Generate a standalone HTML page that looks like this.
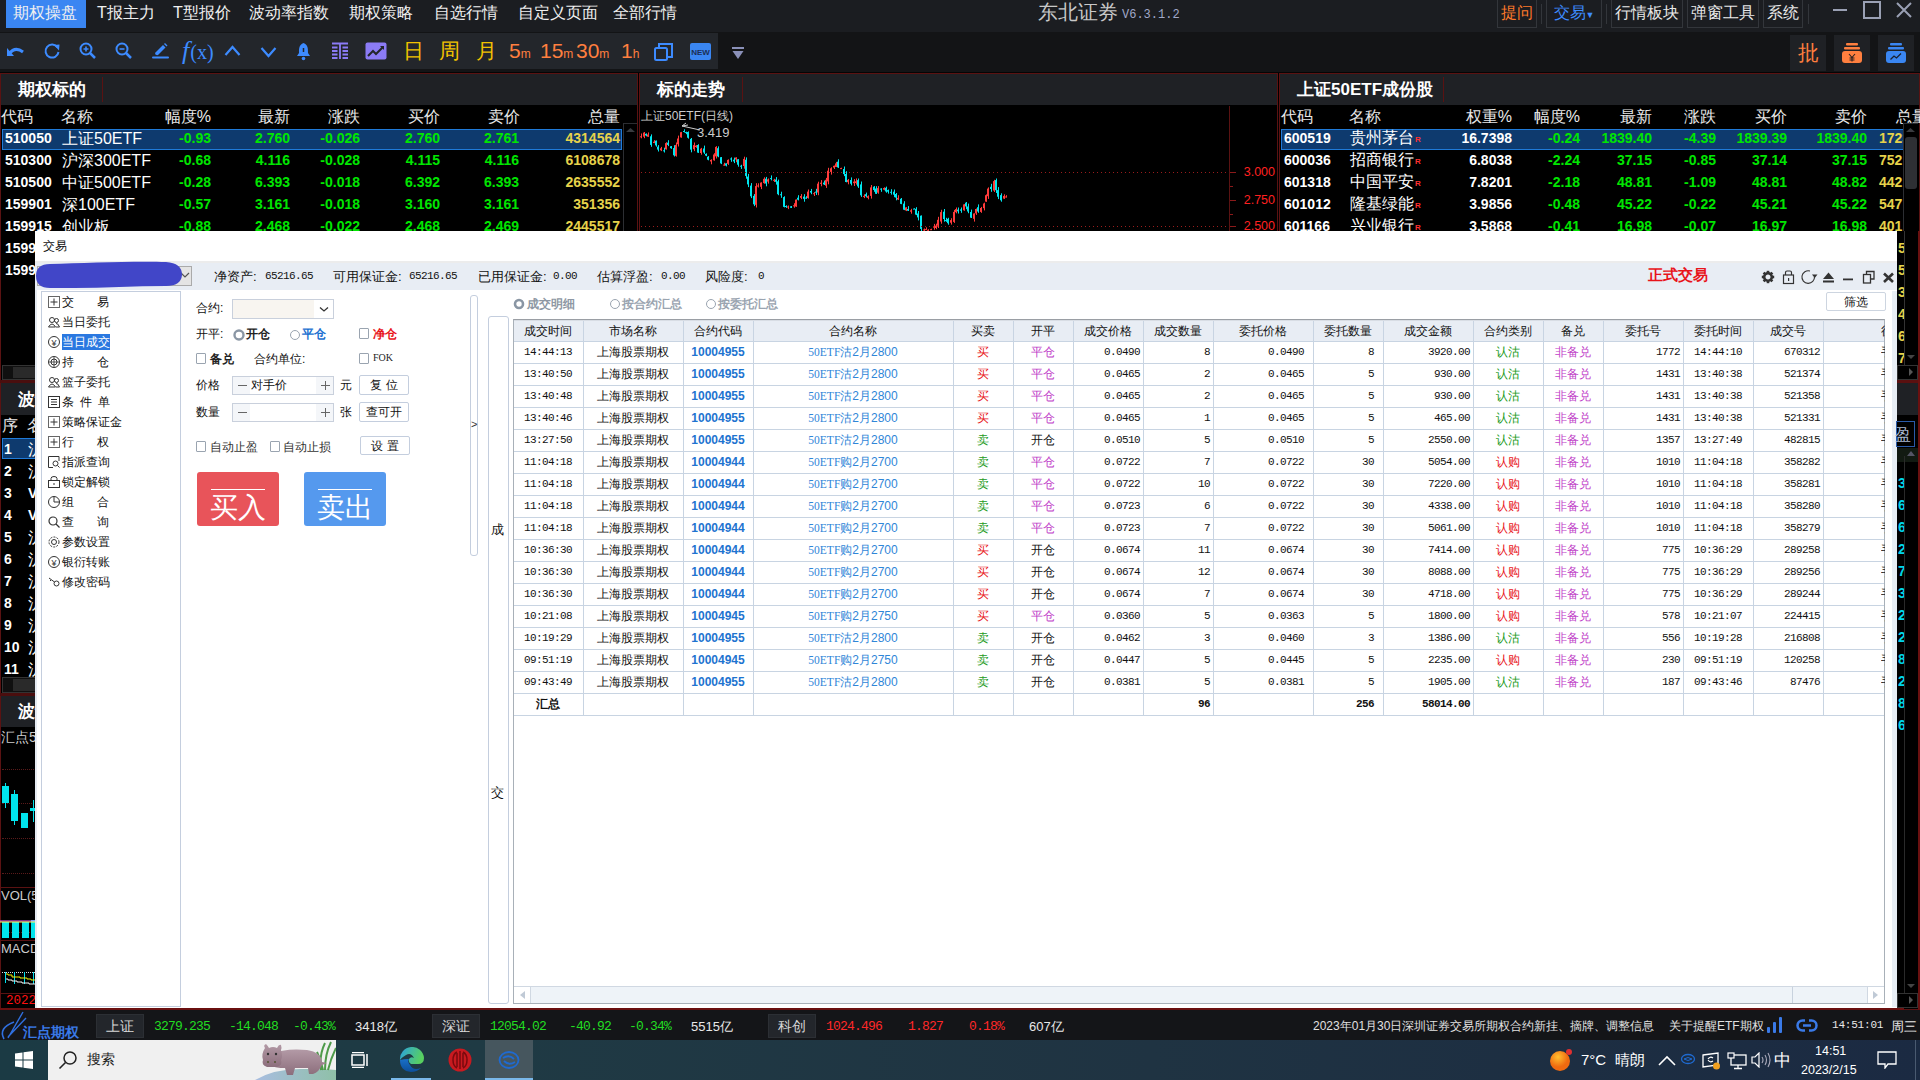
<!DOCTYPE html>
<html><head><meta charset="utf-8">
<style>
*{margin:0;padding:0;box-sizing:border-box}
html,body{width:1920px;height:1080px;overflow:hidden;background:#000;font-family:"Liberation Sans",sans-serif;position:relative}
.a{position:absolute;white-space:nowrap}
#menubar{left:0;top:0;width:1920px;height:32px;background:#1b1d21}
#toolbar{left:0;top:32px;width:1920px;height:40px;background:#131416}
#tbl{left:0;top:33px;width:718px;height:36px;background:#23262b}
#gap{left:0;top:72px;width:1920px;height:1px;background:#050505}
.panel{top:73px;height:937px;background:#000;border:1px solid #5a1212}
.phead{left:0;top:0;height:32px;background:#1f2125;border-bottom:1px solid #5a1212}
.ptitle{color:#fff;font-weight:bold;font-size:17px;top:5px}
.w{color:#fff}.g{color:#00e600}.y{color:#e6d24b}.r{color:#ff2020}
.num{font-weight:bold;font-size:14px}
#dlg{left:35px;top:231px;width:1862px;height:779px;background:#fdfdfe;border:1px solid #c9d3e0}
#status{left:0;top:1010px;width:1920px;height:30px;background:#141518;border-top:2px solid #5a1212}
#taskbar{left:0;top:1040px;width:1920px;height:40px;background:#1d2f3a}
.mi{top:3px;font-size:16px;color:#f0f0f0}
.mbtn{top:0;height:28px;border:1px solid #33363b;border-top:none;font-size:16px;color:#e8e8e8;text-align:center;line-height:26px}
.tbk{top:5px;font-size:21px;line-height:26px}
.tbk small{font-size:12px}
.rbx{top:35px;width:36px;height:36px;background:#1f2125}
.phd{height:31px;background:#1f2125}
.th{font-size:16px;color:#e8e8e8}
.nm{font-size:16px}
.btn{border:1px solid #c4cede;border-radius:2px;background:#fff;font-size:12px;color:#111;text-align:center;line-height:18px}
i{display:inline-block;width:1em;text-align:center;font-style:normal}
</style></head><body>
<div id="menubar" class="a">
<div class="a" style="left:6px;top:0;width:80px;height:28px;background:#3a86f2"></div>
<div class="a mi" style="left:13px"><i>期</i><i>权</i><i>操</i><i>盘</i></div>
<div class="a mi" style="left:97px">T<i>报</i><i>主</i><i>力</i></div>
<div class="a mi" style="left:173px">T<i>型</i><i>报</i><i>价</i></div>
<div class="a mi" style="left:249px"><i>波</i><i>动</i><i>率</i><i>指</i><i>数</i></div>
<div class="a mi" style="left:349px"><i>期</i><i>权</i><i>策</i><i>略</i></div>
<div class="a mi" style="left:434px"><i>自</i><i>选</i><i>行</i><i>情</i></div>
<div class="a mi" style="left:518px"><i>自</i><i>定</i><i>义</i><i>页</i><i>面</i></div>
<div class="a mi" style="left:613px"><i>全</i><i>部</i><i>行</i><i>情</i></div>
<div class="a" style="left:1038px;top:-1px;font-size:20px;color:#c8c8c8"><i>东</i><i>北</i><i>证</i><i>券</i></div><div class="a" style="left:1122px;top:8px;font-family:'Liberation Mono',monospace;font-size:12px;color:#a0a8c8">V6.3.1.2</div>
<div class="a mbtn" style="left:1497px;width:40px;color:#ff7a2a"><i>提</i><i>问</i></div>
<div class="a" style="left:1541px;top:4px;width:1px;height:20px;background:#33363b"></div>
<div class="a mbtn" style="left:1546px;width:56px;color:#3d8bff"><i>交</i><i>易</i><span style="font-size:9px">▼</span></div>
<div class="a" style="left:1606px;top:4px;width:1px;height:20px;background:#33363b"></div>
<div class="a mbtn" style="left:1611px;width:72px"><i>行</i><i>情</i><i>板</i><i>块</i></div>
<div class="a mbtn" style="left:1687px;width:72px"><i>弹</i><i>窗</i><i>工</i><i>具</i></div>
<div class="a mbtn" style="left:1763px;width:40px"><i>系</i><i>统</i></div>
<div class="a" style="left:1808px;top:4px;width:1px;height:20px;background:#33363b"></div>
<div class="a" style="left:1833px;top:9px;width:14px;height:2px;background:#9aa0b4"></div>
<div class="a" style="left:1863px;top:1px;width:18px;height:18px;border:2px solid #9aa0b4"></div>
<svg class="a" style="left:1895px;top:2px" width="18" height="16"><path d="M2 1 L16 15 M16 1 L2 15" stroke="#9aa0b4" stroke-width="2"/></svg>
</div>
<div id="toolbar" class="a"></div>
<div id="tbl" class="a">
<svg class="a" style="left:6px;top:11px" width="20" height="16"><path d="M3 10 Q9 2 17 8" stroke="#3d8bff" stroke-width="3" fill="none"/><path d="M1 4 L1 12 L8 12 Z" fill="#3d8bff"/></svg>
<svg class="a" style="left:43px;top:9px" width="18" height="18"><path d="M14.5 5.5 A6.5 6.5 0 1 0 15.5 10" stroke="#3d8bff" stroke-width="2" fill="none"/><path d="M11 3 L16.5 2.5 L16 8.5 Z" fill="#3d8bff"/></svg>
<svg class="a" style="left:79px;top:9px" width="18" height="18"><circle cx="7" cy="7" r="5.5" stroke="#3d8bff" stroke-width="2" fill="none"/><path d="M11 11 L16 16" stroke="#3d8bff" stroke-width="2.5"/><path d="M4.5 7 H9.5 M7 4.5 V9.5" stroke="#3d8bff" stroke-width="1.6"/></svg>
<svg class="a" style="left:115px;top:9px" width="18" height="18"><circle cx="7" cy="7" r="5.5" stroke="#3d8bff" stroke-width="2" fill="none"/><path d="M11 11 L16 16" stroke="#3d8bff" stroke-width="2.5"/><path d="M4.5 7 H9.5" stroke="#3d8bff" stroke-width="1.6"/></svg>
<svg class="a" style="left:151px;top:9px" width="18" height="18"><path d="M4.5 10.5 L12 3 L14.5 5.5 L7 13 Q5 13.5 4 12Z" fill="#3d8bff"/><path d="M13 2 L14 1 L16.5 3.5 L15.5 4.5Z" fill="#3d8bff"/><path d="M2 15.5 H17" stroke="#3d8bff" stroke-width="2" stroke-linecap="round"/></svg>
<div class="a" style="left:182px;top:3px;font-family:'Liberation Serif',serif;font-style:italic;font-size:26px;color:#3d8bff">f<span style="font-style:normal;font-size:20px;margin-left:1px">(x)</span></div>
<svg class="a" style="left:224px;top:12px" width="17" height="12"><path d="M1.5 10 L8.5 2 L15.5 10" stroke="#3d8bff" stroke-width="2.2" fill="none"/></svg>
<svg class="a" style="left:260px;top:13px" width="17" height="12"><path d="M1.5 2 L8.5 10 L15.5 2" stroke="#3d8bff" stroke-width="2.2" fill="none"/></svg>
<svg class="a" style="left:296px;top:9px" width="15" height="19"><path d="M7.5 1 C3 3 3 6 3 11 L1 14 H14 L12 11 C12 6 12 3 7.5 1Z" fill="#3d8bff"/><circle cx="7.5" cy="16.5" r="1.8" fill="#3d8bff"/><path d="M7.5 6 V10" stroke="#23262b" stroke-width="1.5"/></svg>
<svg class="a" style="left:331px;top:9px" width="18" height="18"><path d="M1 1.5H17M9 1V17M1 5.5H6.5M1 9H6.5M1 12.5H6.5M1 16H6.5M11.5 5.5H17M11.5 9H17M11.5 12.5H17M11.5 16H17" stroke="#8b7bf5" stroke-width="1.8"/></svg>
<svg class="a" style="left:365px;top:9px" width="22" height="18"><rect x="0.5" y="0.5" width="21" height="17" rx="2" fill="#8b7bf5"/><path d="M3 14 L8 9 L11 12 L18 5" stroke="#23262b" stroke-width="2" fill="none"/><path d="M15 4 L19 4 L19 8 Z" fill="#23262b"/></svg>
<div class="a tbk" style="left:403px;color:#f2c200"><i>日</i></div>
<div class="a tbk" style="left:439px;color:#f2c200"><i>周</i></div>
<div class="a tbk" style="left:476px;color:#f2c200"><i>月</i></div>
<div class="a tbk" style="left:509px;color:#ff7f3f">5<small>m</small></div>
<div class="a tbk" style="left:540px;color:#ff7f3f">15<small>m</small></div>
<div class="a tbk" style="left:576px;color:#ff7f3f">30<small>m</small></div>
<div class="a tbk" style="left:621px;color:#ff7f3f">1<small>h</small></div>
<svg class="a" style="left:654px;top:9px" width="20" height="20"><rect x="1" y="6" width="12" height="12" rx="1.5" stroke="#3d8bff" stroke-width="2" fill="none"/><path d="M5 5 V2 H18 V15 H14" stroke="#3d8bff" stroke-width="2" fill="none"/></svg>
<svg class="a" style="left:690px;top:10px" width="21" height="17"><rect x="0" y="0" width="21" height="17" rx="2" fill="#3a86f2"/><text x="10.5" y="12" font-family="Liberation Sans" font-weight="bold" font-size="8" fill="#1c2f55" text-anchor="middle">NEW</text></svg>
</div>
<svg class="a" style="left:732px;top:47px" width="12" height="13"><rect x="0" y="0" width="12" height="2" fill="#8a90b8"/><path d="M0.5 4 H11.5 L6 12 Z" fill="#8a90b8"/></svg>
<div class="a rbx" style="left:1790px;color:#ff7f3f;font-size:21px;line-height:36px;text-align:center"><i>批</i></div>
<div class="a rbx" style="left:1834px"><svg width="36" height="36"><rect x="12" y="8" width="12" height="2.5" rx="1" fill="#ff7f3f"/><rect x="10" y="12" width="16" height="2.5" rx="1" fill="#ff7f3f"/><rect x="8" y="16" width="20" height="12" rx="3" fill="#ff7f3f"/><path d="M15 19 L18 22.5 L21 19 M18 22.5 V26.5 M15.5 23 H20.5 M15.5 25 H20.5" stroke="#2a2020" stroke-width="1.1" fill="none"/></svg></div>
<div class="a rbx" style="left:1878px"><svg width="36" height="36"><rect x="12" y="8" width="12" height="2.5" rx="1" fill="#3a86f2"/><rect x="10" y="12" width="16" height="2.5" rx="1" fill="#3a86f2"/><rect x="8" y="16" width="20" height="12" rx="3" fill="#3a86f2"/><path d="M12.5 24.5 L16 21 L18.5 23 L23 18.5" stroke="#1a2030" stroke-width="1.3" fill="none"/></svg></div>
<div id="gap" class="a"></div>
<div class="panel a" style="left:0;width:638px"></div>
<div class="panel a" style="left:639px;width:639px"></div>
<div class="panel a" style="left:1279px;width:641px"></div>
<div class="a phd" style="left:1px;top:74px;width:636px"></div>
<div class="a phd" style="left:640px;top:74px;width:637px"></div>
<div class="a phd" style="left:1280px;top:74px;width:639px"></div>
<div class="a" style="left:102px;top:77px;width:1px;height:25px;background:#5a1212"></div>
<div class="a" style="left:742px;top:77px;width:1px;height:25px;background:#5a1212"></div>
<div class="a" style="left:1443px;top:77px;width:1px;height:25px;background:#5a1212"></div>
<div class="a ptitle" style="left:18px;top:78px;"><i>期</i><i>权</i><i>标</i><i>的</i></div>
<div class="a ptitle" style="left:657px;top:78px;"><i>标</i><i>的</i><i>走</i><i>势</i></div>
<div class="a ptitle" style="left:1297px;top:78px;"><i>上</i><i>证</i>50ETF<i>成</i><i>份</i><i>股</i></div>
<div class="a th" style="left:1px;top:107px;"><i>代</i><i>码</i></div>
<div class="a th" style="left:61px;top:107px;"><i>名</i><i>称</i></div>
<div class="a th" style="right:1709px;top:107px;"><i>幅</i><i>度</i>%</div>
<div class="a th" style="right:1630px;top:107px;"><i>最</i><i>新</i></div>
<div class="a th" style="right:1560px;top:107px;"><i>涨</i><i>跌</i></div>
<div class="a th" style="right:1480px;top:107px;"><i>买</i><i>价</i></div>
<div class="a th" style="right:1400px;top:107px;"><i>卖</i><i>价</i></div>
<div class="a th" style="right:1300px;top:107px;"><i>总</i><i>量</i></div>
<div class="a" style="left:2px;top:129px;width:620px;height:21px;background:#0e3a6e;border:1px solid #1f7ad8"></div>
<div class="a num w" style="left:5px;top:130px;">510050</div>
<div class="a nm w" style="left:62px;top:129px;"><i>上</i><i>证</i>50ETF</div>
<div class="a num g" style="right:1709px;top:130px;">-0.93</div>
<div class="a num g" style="right:1630px;top:130px;">2.760</div>
<div class="a num g" style="right:1560px;top:130px;">-0.026</div>
<div class="a num g" style="right:1480px;top:130px;">2.760</div>
<div class="a num g" style="right:1401px;top:130px;">2.761</div>
<div class="a num y" style="right:1300px;top:130px;">4314564</div>
<div class="a num w" style="left:5px;top:152px;">510300</div>
<div class="a nm w" style="left:62px;top:151px;"><i>沪</i><i>深</i>300ETF</div>
<div class="a num g" style="right:1709px;top:152px;">-0.68</div>
<div class="a num g" style="right:1630px;top:152px;">4.116</div>
<div class="a num g" style="right:1560px;top:152px;">-0.028</div>
<div class="a num g" style="right:1480px;top:152px;">4.115</div>
<div class="a num g" style="right:1401px;top:152px;">4.116</div>
<div class="a num y" style="right:1300px;top:152px;">6108678</div>
<div class="a num w" style="left:5px;top:174px;">510500</div>
<div class="a nm w" style="left:62px;top:173px;"><i>中</i><i>证</i>500ETF</div>
<div class="a num g" style="right:1709px;top:174px;">-0.28</div>
<div class="a num g" style="right:1630px;top:174px;">6.393</div>
<div class="a num g" style="right:1560px;top:174px;">-0.018</div>
<div class="a num g" style="right:1480px;top:174px;">6.392</div>
<div class="a num g" style="right:1401px;top:174px;">6.393</div>
<div class="a num y" style="right:1300px;top:174px;">2635552</div>
<div class="a num w" style="left:5px;top:196px;">159901</div>
<div class="a nm w" style="left:62px;top:195px;"><i>深</i>100ETF</div>
<div class="a num g" style="right:1709px;top:196px;">-0.57</div>
<div class="a num g" style="right:1630px;top:196px;">3.161</div>
<div class="a num g" style="right:1560px;top:196px;">-0.018</div>
<div class="a num g" style="right:1480px;top:196px;">3.160</div>
<div class="a num g" style="right:1401px;top:196px;">3.161</div>
<div class="a num y" style="right:1300px;top:196px;">351356</div>
<div class="a num w" style="left:5px;top:218px;">159915</div>
<div class="a nm w" style="left:62px;top:217px;"><i>创</i><i>业</i><i>板</i></div>
<div class="a num g" style="right:1709px;top:218px;">-0.88</div>
<div class="a num g" style="right:1630px;top:218px;">2.468</div>
<div class="a num g" style="right:1560px;top:218px;">-0.022</div>
<div class="a num g" style="right:1480px;top:218px;">2.468</div>
<div class="a num g" style="right:1401px;top:218px;">2.469</div>
<div class="a num y" style="right:1300px;top:218px;">2445517</div>
<div class="a num w" style="left:5px;top:240px;">159919</div>
<div class="a nm w" style="left:62px;top:239px;">300ETF</div>
<div class="a num g" style="right:1709px;top:240px;">-0.68</div>
<div class="a num g" style="right:1630px;top:240px;">4.116</div>
<div class="a num g" style="right:1560px;top:240px;">-0.028</div>
<div class="a num g" style="right:1480px;top:240px;">4.115</div>
<div class="a num g" style="right:1401px;top:240px;">4.116</div>
<div class="a num y" style="right:1300px;top:240px;">1234567</div>
<div class="a num w" style="left:5px;top:262px;">159922</div>
<div class="a nm w" style="left:62px;top:261px;">500ETF</div>
<div class="a num g" style="right:1709px;top:262px;">-0.28</div>
<div class="a num g" style="right:1630px;top:262px;">6.393</div>
<div class="a num g" style="right:1560px;top:262px;">-0.018</div>
<div class="a num g" style="right:1480px;top:262px;">6.392</div>
<div class="a num g" style="right:1401px;top:262px;">6.393</div>
<div class="a num y" style="right:1300px;top:262px;">234567</div>
<div class="a" style="left:623px;top:123px;width:14px;height:242px;background:#000;border-left:1px solid #2c2e32;border-top:1px solid #2c2e32"></div>
<svg class="a" style="left:625px;top:127px" width="11" height="6"><path d="M1 5 L5.5 1 L10 5Z" fill="#3a3c40"/></svg>
<div class="a" style="left:2px;top:365px;width:634px;height:15px;background:#101010;border:1px solid #333"></div>
<div class="a" style="left:13px;top:367px;width:22px;height:11px;background:#2a2a2a"></div>
<div class="a" style="left:0;top:380px;width:638px;height:3px;background:#4a0e0e"></div>
<div class="a" style="left:1px;top:383px;width:636px;height:32px;background:#1f2125"></div>
<div class="a ptitle" style="left:18px;top:388px;"><i>波</i><i>动</i><i>率</i></div>
<div class="a th" style="left:2px;top:416px;"><i>序</i>&nbsp;&nbsp;<i>名</i><i>称</i></div>
<div class="a" style="left:2px;top:438px;width:620px;height:21px;background:#0e3a6e;border:1px solid #1f7ad8"></div>
<div class="a num w" style="left:4px;top:441px;">1</div>
<div class="a nm w" style="left:28px;top:440px;"><i>沪</i></div>
<div class="a num w" style="left:4px;top:463px;">2</div>
<div class="a nm w" style="left:28px;top:462px;"><i>沪</i></div>
<div class="a num w" style="left:4px;top:485px;">3</div>
<div class="a num w" style="left:28px;top:485px;">V</div>
<div class="a num w" style="left:4px;top:507px;">4</div>
<div class="a num w" style="left:28px;top:507px;">V</div>
<div class="a num w" style="left:4px;top:529px;">5</div>
<div class="a nm w" style="left:28px;top:528px;"><i>沪</i></div>
<div class="a num w" style="left:4px;top:551px;">6</div>
<div class="a nm w" style="left:28px;top:550px;"><i>沪</i></div>
<div class="a num w" style="left:4px;top:573px;">7</div>
<div class="a nm w" style="left:28px;top:572px;"><i>沪</i></div>
<div class="a num w" style="left:4px;top:595px;">8</div>
<div class="a nm w" style="left:28px;top:594px;"><i>沪</i></div>
<div class="a num w" style="left:4px;top:617px;">9</div>
<div class="a nm w" style="left:28px;top:616px;"><i>沪</i></div>
<div class="a num w" style="left:4px;top:639px;">10</div>
<div class="a nm w" style="left:28px;top:638px;"><i>沪</i></div>
<div class="a num w" style="left:4px;top:661px;">11</div>
<div class="a nm w" style="left:28px;top:660px;"><i>沪</i></div>
<div class="a" style="left:2px;top:677px;width:634px;height:16px;background:#101010;border:1px solid #333"></div>
<div class="a" style="left:13px;top:679px;width:22px;height:12px;background:#2a2a2a"></div>
<div class="a" style="left:0;top:693px;width:638px;height:3px;background:#4a0e0e"></div>
<div class="a" style="left:1px;top:696px;width:636px;height:31px;background:#1f2125"></div>
<div class="a ptitle" style="left:18px;top:700px;"><i>波</i><i>动</i><i>率</i></div>
<div class="a nm" style="left:1px;top:729px;color:#ccc;font-size:14px"><i>汇</i><i>点</i>50</div>
<div class="a" style="left:2px;top:769px;width:630px;border-top:1px dotted #5a1a1a"></div>
<div class="a" style="left:2px;top:803px;width:630px;border-top:1px dotted #5a1a1a"></div>
<div class="a" style="left:2px;top:838px;width:630px;border-top:1px dotted #5a1a1a"></div>
<div class="a" style="left:2px;top:873px;width:630px;border-top:1px dotted #5a1a1a"></div>
<div class="a" style="left:2px;top:932px;width:630px;border-top:1px dotted #5a1a1a"></div>
<div class="a" style="left:2px;top:972px;width:630px;height:1px;background:repeating-linear-gradient(90deg,#ddd 0 1px,transparent 1px 2px)"></div>
<div class="a" style="left:0;top:887px;width:638px;height:1px;background:#5a1212"></div>
<div class="a" style="left:0;top:940px;width:638px;height:1px;background:#5a1212"></div>
<div class="a nm" style="left:1px;top:888px;color:#ccc;font-size:13px">VOL(5)</div>
<div class="a nm" style="left:1px;top:941px;color:#ccc;font-size:13px">MACD</div>
<svg class="a" style="left:0;top:780px" width="40" height="60"><rect x="2" y="6" width="7" height="17" fill="#00e5ee"/><rect x="5" y="3" width="1" height="25" fill="#00e5ee"/><rect x="11" y="14" width="7" height="27" fill="#00e5ee"/><rect x="14" y="10" width="1" height="35" fill="#00e5ee"/><rect x="21" y="33" width="7" height="15" fill="#00e5ee"/><rect x="30" y="28" width="7" height="3" fill="#00e5ee"/><rect x="33" y="20" width="1" height="22" fill="#00e5ee"/></svg>
<svg class="a" style="left:0;top:915px" width="40" height="25"><rect x="2" y="7" width="7" height="16" fill="#00e5ee"/><rect x="12" y="7" width="7" height="16" fill="#00e5ee"/><rect x="22" y="7" width="7" height="16" fill="#00e5ee"/><rect x="31" y="5" width="7" height="18" fill="#00e5ee"/><path d="M0 6 H40" stroke="#ff60ff" stroke-width="1"/><path d="M0 7 H40" stroke="#ffff60" stroke-width="1"/></svg>
<svg class="a" style="left:0;top:970px" width="40" height="18"><path d="M5.5 2 V13 M14.5 2 V14 M24.5 2 V14 M33.5 2 V14" stroke="#00e0f0" stroke-width="1"/><path d="M6 4 H8 V5 H12 V7 H20 V8 H27 V9 H31 V10 H36" stroke="#f0f000" stroke-width="1" fill="none"/><path d="M6 9 H8 V10 H12 V11 H17 V12 H22 V13 H29 V14 H36" stroke="#f0f0f0" stroke-width="1" fill="none"/></svg>
<div class="a" style="left:0;top:993px;width:35px;height:1px;background:#5a1212"></div><div class="a" style="left:2px;top:994px;width:33px;height:14px;background:#000"></div><div class="a" style="left:6px;top:995px;font-family:'Liberation Mono',monospace;font-size:12.5px;line-height:13px;color:#ff1010">2022</div>
<div class="a" style="left:641px;top:108px;color:#ccc;font-size:12px"><i>上</i><i>证</i>50ETF(<i>日</i><i>线</i>)</div>
<svg class="a" style="left:638px;top:105px" width="600" height="126"><rect x="3" y="28.5" width="1" height="4.8" fill="#ff3b3b"/><rect x="2" y="31.3" width="2" height="1.0" fill="#ff3b3b"/><rect x="6" y="27.0" width="1" height="6.2" fill="#ff3b3b"/><rect x="5" y="27.6" width="2" height="4.1" fill="#ff3b3b"/><rect x="8" y="28.5" width="1" height="2.8" fill="#00e5ee"/><rect x="7" y="28.8" width="2" height="1.7" fill="#00e5ee"/><rect x="10" y="27.4" width="1" height="4.4" fill="#ff3b3b"/><rect x="9" y="29.5" width="2" height="2.2" fill="#ff3b3b"/><rect x="13" y="29.4" width="1" height="12.4" fill="#00e5ee"/><rect x="12" y="31.3" width="2" height="8.6" fill="#00e5ee"/><rect x="16" y="35.1" width="1" height="3.1" fill="#ff3b3b"/><rect x="15" y="36.7" width="2" height="1.3" fill="#ff3b3b"/><rect x="18" y="35.6" width="1" height="6.1" fill="#00e5ee"/><rect x="17" y="35.7" width="2" height="4.7" fill="#00e5ee"/><rect x="20" y="40.1" width="1" height="6.4" fill="#00e5ee"/><rect x="19" y="41.7" width="2" height="2.9" fill="#00e5ee"/><rect x="23" y="41.9" width="1" height="4.2" fill="#ff3b3b"/><rect x="22" y="43.3" width="2" height="2.0" fill="#ff3b3b"/><rect x="26" y="42.7" width="1" height="4.8" fill="#00e5ee"/><rect x="25" y="45.3" width="2" height="1.0" fill="#00e5ee"/><rect x="28" y="37.2" width="1" height="7.3" fill="#ff3b3b"/><rect x="27" y="38.1" width="2" height="6.2" fill="#ff3b3b"/><rect x="30" y="35.2" width="1" height="5.9" fill="#00e5ee"/><rect x="29" y="37.7" width="2" height="2.2" fill="#00e5ee"/><rect x="33" y="41.2" width="1" height="2.6" fill="#00e5ee"/><rect x="32" y="41.2" width="2" height="2.0" fill="#00e5ee"/><rect x="36" y="40.2" width="1" height="11.3" fill="#00e5ee"/><rect x="35" y="43.1" width="2" height="7.2" fill="#00e5ee"/><rect x="38" y="37.5" width="1" height="14.1" fill="#ff3b3b"/><rect x="37" y="39.9" width="2" height="10.9" fill="#ff3b3b"/><rect x="40" y="30.6" width="1" height="10.9" fill="#ff3b3b"/><rect x="39" y="33.5" width="2" height="5.7" fill="#ff3b3b"/><rect x="43" y="26.9" width="1" height="5.7" fill="#ff3b3b"/><rect x="42" y="27.2" width="2" height="5.2" fill="#ff3b3b"/><rect x="46" y="24.3" width="1" height="3.2" fill="#00e5ee"/><rect x="45" y="26.0" width="2" height="1.0" fill="#00e5ee"/><rect x="48" y="26.7" width="1" height="2.5" fill="#00e5ee"/><rect x="47" y="27.1" width="2" height="1.0" fill="#00e5ee"/><rect x="50" y="26.4" width="1" height="7.2" fill="#00e5ee"/><rect x="49" y="27.0" width="2" height="5.7" fill="#00e5ee"/><rect x="53" y="33.0" width="1" height="14.3" fill="#00e5ee"/><rect x="52" y="33.9" width="2" height="10.7" fill="#00e5ee"/><rect x="56" y="37.5" width="1" height="8.6" fill="#ff3b3b"/><rect x="55" y="40.1" width="2" height="4.1" fill="#ff3b3b"/><rect x="58" y="40.1" width="1" height="2.7" fill="#ff3b3b"/><rect x="57" y="40.7" width="2" height="1.3" fill="#ff3b3b"/><rect x="60" y="39.2" width="1" height="8.7" fill="#00e5ee"/><rect x="59" y="40.0" width="2" height="7.6" fill="#00e5ee"/><rect x="63" y="42.9" width="1" height="6.8" fill="#ff3b3b"/><rect x="62" y="43.7" width="2" height="4.3" fill="#ff3b3b"/><rect x="66" y="40.6" width="1" height="8.3" fill="#00e5ee"/><rect x="65" y="43.5" width="2" height="4.0" fill="#00e5ee"/><rect x="68" y="48.4" width="1" height="2.7" fill="#00e5ee"/><rect x="67" y="48.9" width="2" height="1.7" fill="#00e5ee"/><rect x="70" y="51.1" width="1" height="4.2" fill="#00e5ee"/><rect x="69" y="51.8" width="2" height="2.9" fill="#00e5ee"/><rect x="73" y="54.3" width="1" height="5.0" fill="#ff3b3b"/><rect x="72" y="54.9" width="2" height="1.6" fill="#ff3b3b"/><rect x="76" y="48.2" width="1" height="7.4" fill="#ff3b3b"/><rect x="75" y="49.5" width="2" height="5.8" fill="#ff3b3b"/><rect x="78" y="41.2" width="1" height="12.3" fill="#ff3b3b"/><rect x="77" y="41.9" width="2" height="9.5" fill="#ff3b3b"/><rect x="80" y="41.4" width="1" height="10.8" fill="#00e5ee"/><rect x="79" y="43.2" width="2" height="8.2" fill="#00e5ee"/><rect x="83" y="52.0" width="1" height="7.1" fill="#00e5ee"/><rect x="82" y="52.2" width="2" height="6.2" fill="#00e5ee"/><rect x="86" y="57.8" width="1" height="2.9" fill="#ff3b3b"/><rect x="85" y="59.6" width="2" height="1.0" fill="#ff3b3b"/><rect x="88" y="58.4" width="1" height="3.0" fill="#00e5ee"/><rect x="87" y="58.4" width="2" height="2.2" fill="#00e5ee"/><rect x="90" y="54.4" width="1" height="5.5" fill="#ff3b3b"/><rect x="89" y="54.9" width="2" height="3.9" fill="#ff3b3b"/><rect x="93" y="52.4" width="1" height="4.4" fill="#00e5ee"/><rect x="92" y="53.5" width="2" height="1.0" fill="#00e5ee"/><rect x="96" y="52.6" width="1" height="5.5" fill="#00e5ee"/><rect x="95" y="54.7" width="2" height="1.7" fill="#00e5ee"/><rect x="98" y="52.4" width="1" height="4.8" fill="#ff3b3b"/><rect x="97" y="52.5" width="2" height="2.0" fill="#ff3b3b"/><rect x="100" y="54.3" width="1" height="7.4" fill="#00e5ee"/><rect x="99" y="54.3" width="2" height="5.4" fill="#00e5ee"/><rect x="103" y="59.8" width="1" height="4.1" fill="#00e5ee"/><rect x="102" y="60.7" width="2" height="1.0" fill="#00e5ee"/><rect x="106" y="51.7" width="1" height="12.0" fill="#ff3b3b"/><rect x="105" y="53.9" width="2" height="7.1" fill="#ff3b3b"/><rect x="108" y="52.4" width="1" height="21.3" fill="#00e5ee"/><rect x="107" y="54.8" width="2" height="16.1" fill="#00e5ee"/><rect x="110" y="68.9" width="1" height="13.2" fill="#00e5ee"/><rect x="109" y="71.6" width="2" height="7.8" fill="#00e5ee"/><rect x="113" y="78.1" width="1" height="15.0" fill="#00e5ee"/><rect x="112" y="80.6" width="2" height="10.7" fill="#00e5ee"/><rect x="116" y="89.1" width="1" height="12.0" fill="#00e5ee"/><rect x="115" y="90.9" width="2" height="8.4" fill="#00e5ee"/><rect x="118" y="78.2" width="1" height="24.3" fill="#ff3b3b"/><rect x="117" y="81.1" width="2" height="18.7" fill="#ff3b3b"/><rect x="120" y="78.3" width="1" height="4.2" fill="#ff3b3b"/><rect x="119" y="80.5" width="2" height="1.0" fill="#ff3b3b"/><rect x="123" y="77.4" width="1" height="6.7" fill="#ff3b3b"/><rect x="122" y="77.6" width="2" height="4.2" fill="#ff3b3b"/><rect x="126" y="72.3" width="1" height="6.4" fill="#ff3b3b"/><rect x="125" y="73.8" width="2" height="4.3" fill="#ff3b3b"/><rect x="128" y="71.9" width="1" height="9.4" fill="#00e5ee"/><rect x="127" y="73.7" width="2" height="4.8" fill="#00e5ee"/><rect x="130" y="73.5" width="1" height="5.1" fill="#ff3b3b"/><rect x="129" y="74.4" width="2" height="2.2" fill="#ff3b3b"/><rect x="133" y="70.4" width="1" height="5.0" fill="#00e5ee"/><rect x="132" y="73.1" width="2" height="1.0" fill="#00e5ee"/><rect x="136" y="73.8" width="1" height="3.2" fill="#ff3b3b"/><rect x="135" y="74.8" width="2" height="1.0" fill="#ff3b3b"/><rect x="138" y="72.1" width="1" height="7.5" fill="#00e5ee"/><rect x="137" y="74.5" width="2" height="2.3" fill="#00e5ee"/><rect x="140" y="74.6" width="1" height="15.6" fill="#00e5ee"/><rect x="139" y="76.3" width="2" height="12.9" fill="#00e5ee"/><rect x="143" y="86.7" width="1" height="6.1" fill="#00e5ee"/><rect x="142" y="89.2" width="2" height="1.1" fill="#00e5ee"/><rect x="146" y="91.3" width="1" height="11.1" fill="#00e5ee"/><rect x="145" y="92.1" width="2" height="9.8" fill="#00e5ee"/><rect x="148" y="100.3" width="1" height="2.6" fill="#00e5ee"/><rect x="147" y="101.0" width="2" height="1.0" fill="#00e5ee"/><rect x="150" y="100.5" width="1" height="3.6" fill="#ff3b3b"/><rect x="149" y="101.5" width="2" height="1.0" fill="#ff3b3b"/><rect x="153" y="101.1" width="1" height="1.8" fill="#00e5ee"/><rect x="152" y="101.3" width="2" height="1.5" fill="#00e5ee"/><rect x="156" y="98.2" width="1" height="4.5" fill="#ff3b3b"/><rect x="155" y="100.3" width="2" height="1.0" fill="#ff3b3b"/><rect x="158" y="94.5" width="1" height="7.3" fill="#ff3b3b"/><rect x="157" y="94.6" width="2" height="6.9" fill="#ff3b3b"/><rect x="160" y="90.2" width="1" height="5.2" fill="#00e5ee"/><rect x="159" y="92.7" width="2" height="2.0" fill="#00e5ee"/><rect x="163" y="89.1" width="1" height="5.0" fill="#ff3b3b"/><rect x="162" y="91.0" width="2" height="1.8" fill="#ff3b3b"/><rect x="166" y="89.2" width="1" height="7.5" fill="#00e5ee"/><rect x="165" y="91.6" width="2" height="2.2" fill="#00e5ee"/><rect x="168" y="91.2" width="1" height="2.5" fill="#00e5ee"/><rect x="167" y="92.6" width="2" height="1.0" fill="#00e5ee"/><rect x="170" y="84.5" width="1" height="9.1" fill="#ff3b3b"/><rect x="169" y="86.6" width="2" height="6.4" fill="#ff3b3b"/><rect x="173" y="83.9" width="1" height="5.3" fill="#00e5ee"/><rect x="172" y="86.0" width="2" height="1.6" fill="#00e5ee"/><rect x="176" y="87.0" width="1" height="4.0" fill="#ff3b3b"/><rect x="175" y="88.2" width="2" height="1.0" fill="#ff3b3b"/><rect x="178" y="83.8" width="1" height="6.1" fill="#00e5ee"/><rect x="177" y="86.6" width="2" height="1.1" fill="#00e5ee"/><rect x="180" y="76.7" width="1" height="13.5" fill="#ff3b3b"/><rect x="179" y="78.6" width="2" height="8.9" fill="#ff3b3b"/><rect x="183" y="75.1" width="1" height="6.2" fill="#ff3b3b"/><rect x="182" y="77.7" width="2" height="1.2" fill="#ff3b3b"/><rect x="186" y="75.6" width="1" height="4.4" fill="#00e5ee"/><rect x="185" y="77.6" width="2" height="1.8" fill="#00e5ee"/><rect x="188" y="72.9" width="1" height="10.0" fill="#ff3b3b"/><rect x="187" y="74.8" width="2" height="5.9" fill="#ff3b3b"/><rect x="190" y="62.8" width="1" height="16.5" fill="#ff3b3b"/><rect x="189" y="65.7" width="2" height="10.7" fill="#ff3b3b"/><rect x="193" y="62.3" width="1" height="7.3" fill="#ff3b3b"/><rect x="192" y="63.3" width="2" height="3.6" fill="#ff3b3b"/><rect x="196" y="60.6" width="1" height="3.4" fill="#ff3b3b"/><rect x="195" y="60.8" width="2" height="1.8" fill="#ff3b3b"/><rect x="198" y="56.9" width="1" height="5.1" fill="#ff3b3b"/><rect x="197" y="58.4" width="2" height="3.5" fill="#ff3b3b"/><rect x="200" y="54.3" width="1" height="8.6" fill="#00e5ee"/><rect x="199" y="56.7" width="2" height="5.7" fill="#00e5ee"/><rect x="203" y="62.7" width="1" height="1.3" fill="#ff3b3b"/><rect x="202" y="63.1" width="2" height="1.0" fill="#ff3b3b"/><rect x="206" y="61.5" width="1" height="9.6" fill="#00e5ee"/><rect x="205" y="64.0" width="2" height="5.1" fill="#00e5ee"/><rect x="208" y="66.2" width="1" height="11.1" fill="#00e5ee"/><rect x="207" y="69.0" width="2" height="8.0" fill="#00e5ee"/><rect x="210" y="74.0" width="1" height="5.3" fill="#ff3b3b"/><rect x="209" y="74.9" width="2" height="2.2" fill="#ff3b3b"/><rect x="213" y="72.4" width="1" height="8.0" fill="#00e5ee"/><rect x="212" y="75.0" width="2" height="3.7" fill="#00e5ee"/><rect x="216" y="74.1" width="1" height="6.9" fill="#ff3b3b"/><rect x="215" y="76.6" width="2" height="1.6" fill="#ff3b3b"/><rect x="218" y="73.4" width="1" height="6.2" fill="#ff3b3b"/><rect x="217" y="76.3" width="2" height="1.7" fill="#ff3b3b"/><rect x="220" y="73.5" width="1" height="9.4" fill="#00e5ee"/><rect x="219" y="75.1" width="2" height="6.3" fill="#00e5ee"/><rect x="223" y="76.5" width="1" height="15.4" fill="#00e5ee"/><rect x="222" y="79.4" width="2" height="10.9" fill="#00e5ee"/><rect x="226" y="89.3" width="1" height="3.8" fill="#ff3b3b"/><rect x="225" y="90.9" width="2" height="1.0" fill="#ff3b3b"/><rect x="228" y="87.6" width="1" height="4.8" fill="#00e5ee"/><rect x="227" y="89.2" width="2" height="2.0" fill="#00e5ee"/><rect x="230" y="90.4" width="1" height="3.9" fill="#ff3b3b"/><rect x="229" y="91.2" width="2" height="1.7" fill="#ff3b3b"/><rect x="233" y="80.0" width="1" height="13.6" fill="#ff3b3b"/><rect x="232" y="82.4" width="2" height="8.5" fill="#ff3b3b"/><rect x="236" y="81.1" width="1" height="5.7" fill="#00e5ee"/><rect x="235" y="81.7" width="2" height="3.3" fill="#00e5ee"/><rect x="238" y="81.2" width="1" height="7.7" fill="#00e5ee"/><rect x="237" y="83.5" width="2" height="5.3" fill="#00e5ee"/><rect x="240" y="81.1" width="1" height="7.6" fill="#ff3b3b"/><rect x="239" y="83.1" width="2" height="4.5" fill="#ff3b3b"/><rect x="243" y="83.3" width="1" height="3.5" fill="#00e5ee"/><rect x="242" y="83.6" width="2" height="1.0" fill="#00e5ee"/><rect x="246" y="82.3" width="1" height="3.0" fill="#ff3b3b"/><rect x="245" y="83.0" width="2" height="1.7" fill="#ff3b3b"/><rect x="248" y="81.6" width="1" height="6.1" fill="#00e5ee"/><rect x="247" y="82.8" width="2" height="3.7" fill="#00e5ee"/><rect x="250" y="84.5" width="1" height="4.1" fill="#00e5ee"/><rect x="249" y="85.1" width="2" height="1.6" fill="#00e5ee"/><rect x="253" y="84.2" width="1" height="5.4" fill="#00e5ee"/><rect x="252" y="86.8" width="2" height="1.0" fill="#00e5ee"/><rect x="256" y="84.5" width="1" height="7.7" fill="#00e5ee"/><rect x="255" y="86.7" width="2" height="3.0" fill="#00e5ee"/><rect x="258" y="88.0" width="1" height="7.3" fill="#00e5ee"/><rect x="257" y="89.0" width="2" height="3.6" fill="#00e5ee"/><rect x="260" y="90.2" width="1" height="4.7" fill="#ff3b3b"/><rect x="259" y="92.9" width="2" height="1.6" fill="#ff3b3b"/><rect x="263" y="93.0" width="1" height="6.2" fill="#00e5ee"/><rect x="262" y="93.8" width="2" height="5.1" fill="#00e5ee"/><rect x="266" y="96.2" width="1" height="8.9" fill="#00e5ee"/><rect x="265" y="98.6" width="2" height="6.1" fill="#00e5ee"/><rect x="268" y="102.3" width="1" height="3.8" fill="#ff3b3b"/><rect x="267" y="102.4" width="2" height="3.1" fill="#ff3b3b"/><rect x="270" y="101.1" width="1" height="4.9" fill="#00e5ee"/><rect x="269" y="104.0" width="2" height="1.7" fill="#00e5ee"/><rect x="273" y="103.8" width="1" height="4.9" fill="#ff3b3b"/><rect x="272" y="105.3" width="2" height="1.4" fill="#ff3b3b"/><rect x="276" y="103.3" width="1" height="0.7" fill="#00e5ee"/><rect x="275" y="103.6" width="2" height="1.0" fill="#00e5ee"/><rect x="278" y="102.2" width="1" height="7.9" fill="#00e5ee"/><rect x="277" y="103.9" width="2" height="5.7" fill="#00e5ee"/><rect x="280" y="106.0" width="1" height="9.4" fill="#00e5ee"/><rect x="279" y="108.5" width="2" height="3.9" fill="#00e5ee"/><rect x="283" y="110.5" width="1" height="16.2" fill="#00e5ee"/><rect x="282" y="110.7" width="2" height="13.2" fill="#00e5ee"/><rect x="286" y="123.5" width="1" height="2.8" fill="#ff3b3b"/><rect x="285" y="124.5" width="2" height="1.0" fill="#ff3b3b"/><rect x="288" y="122.3" width="1" height="2.0" fill="#ff3b3b"/><rect x="287" y="124.1" width="2" height="1.0" fill="#ff3b3b"/><rect x="290" y="124.2" width="1" height="2.6" fill="#ff3b3b"/><rect x="289" y="124.8" width="2" height="1.0" fill="#ff3b3b"/><rect x="293" y="123.7" width="1" height="1.2" fill="#ff3b3b"/><rect x="292" y="124.2" width="2" height="1.0" fill="#ff3b3b"/><rect x="296" y="118.9" width="1" height="5.8" fill="#ff3b3b"/><rect x="295" y="121.6" width="2" height="1.0" fill="#ff3b3b"/><rect x="298" y="118.7" width="1" height="5.5" fill="#ff3b3b"/><rect x="297" y="120.6" width="2" height="2.4" fill="#ff3b3b"/><rect x="300" y="111.8" width="1" height="11.2" fill="#ff3b3b"/><rect x="299" y="114.8" width="2" height="5.9" fill="#ff3b3b"/><rect x="303" y="104.8" width="1" height="13.9" fill="#ff3b3b"/><rect x="302" y="107.1" width="2" height="9.4" fill="#ff3b3b"/><rect x="306" y="104.0" width="1" height="12.7" fill="#00e5ee"/><rect x="305" y="106.7" width="2" height="7.3" fill="#00e5ee"/><rect x="308" y="112.8" width="1" height="4.0" fill="#00e5ee"/><rect x="307" y="115.1" width="2" height="1.0" fill="#00e5ee"/><rect x="310" y="112.8" width="1" height="6.9" fill="#00e5ee"/><rect x="309" y="113.8" width="2" height="4.4" fill="#00e5ee"/><rect x="313" y="113.2" width="1" height="6.4" fill="#ff3b3b"/><rect x="312" y="115.1" width="2" height="2.6" fill="#ff3b3b"/><rect x="316" y="104.9" width="1" height="13.0" fill="#ff3b3b"/><rect x="315" y="106.9" width="2" height="10.0" fill="#ff3b3b"/><rect x="318" y="102.5" width="1" height="5.8" fill="#ff3b3b"/><rect x="317" y="104.1" width="2" height="3.1" fill="#ff3b3b"/><rect x="320" y="102.5" width="1" height="6.0" fill="#00e5ee"/><rect x="319" y="104.6" width="2" height="1.7" fill="#00e5ee"/><rect x="323" y="102.5" width="1" height="5.3" fill="#00e5ee"/><rect x="322" y="104.4" width="2" height="1.3" fill="#00e5ee"/><rect x="326" y="99.2" width="1" height="6.6" fill="#ff3b3b"/><rect x="325" y="99.4" width="2" height="5.9" fill="#ff3b3b"/><rect x="328" y="97.0" width="1" height="7.2" fill="#00e5ee"/><rect x="327" y="97.7" width="2" height="3.7" fill="#00e5ee"/><rect x="330" y="98.6" width="1" height="9.6" fill="#00e5ee"/><rect x="329" y="101.5" width="2" height="5.0" fill="#00e5ee"/><rect x="333" y="104.6" width="1" height="8.4" fill="#00e5ee"/><rect x="332" y="107.0" width="2" height="5.7" fill="#00e5ee"/><rect x="336" y="108.4" width="1" height="8.2" fill="#ff3b3b"/><rect x="335" y="108.5" width="2" height="5.3" fill="#ff3b3b"/><rect x="338" y="103.5" width="1" height="6.4" fill="#ff3b3b"/><rect x="337" y="104.0" width="2" height="4.4" fill="#ff3b3b"/><rect x="340" y="99.4" width="1" height="8.4" fill="#00e5ee"/><rect x="339" y="102.2" width="2" height="4.3" fill="#00e5ee"/><rect x="343" y="101.9" width="1" height="5.9" fill="#ff3b3b"/><rect x="342" y="103.0" width="2" height="3.9" fill="#ff3b3b"/><rect x="346" y="97.7" width="1" height="7.7" fill="#ff3b3b"/><rect x="345" y="98.5" width="2" height="4.7" fill="#ff3b3b"/><rect x="348" y="89.4" width="1" height="7.3" fill="#ff3b3b"/><rect x="347" y="90.2" width="2" height="6.4" fill="#ff3b3b"/><rect x="350" y="82.4" width="1" height="11.5" fill="#ff3b3b"/><rect x="349" y="83.6" width="2" height="7.6" fill="#ff3b3b"/><rect x="353" y="78.8" width="1" height="8.0" fill="#00e5ee"/><rect x="352" y="81.8" width="2" height="2.2" fill="#00e5ee"/><rect x="356" y="74.8" width="1" height="12.2" fill="#ff3b3b"/><rect x="355" y="76.1" width="2" height="9.5" fill="#ff3b3b"/><rect x="358" y="73.5" width="1" height="14.5" fill="#00e5ee"/><rect x="357" y="75.1" width="2" height="10.1" fill="#00e5ee"/><rect x="360" y="82.1" width="1" height="12.0" fill="#00e5ee"/><rect x="359" y="85.1" width="2" height="6.6" fill="#00e5ee"/><rect x="363" y="88.3" width="1" height="8.4" fill="#00e5ee"/><rect x="362" y="90.1" width="2" height="5.2" fill="#00e5ee"/><rect x="366" y="89.3" width="1" height="4.6" fill="#ff3b3b"/><rect x="365" y="90.9" width="2" height="2.7" fill="#ff3b3b"/><rect x="368" y="90.2" width="1" height="2.2" fill="#ff3b3b"/><rect x="367" y="91.5" width="2" height="1.0" fill="#ff3b3b"/><path d="M50 20 L44 21 M44 21 L48 18 M44 21 L62 25" stroke="#ccc" stroke-width="1" fill="none"/></svg>
<div class="a " style="left:697px;top:125px;color:#ccc;font-size:13px">3.419</div>
<div class="a" style="left:641px;top:172px;width:588px;height:1px;background:repeating-linear-gradient(90deg,#9a1c1c 0 1px,transparent 1px 4px)"></div>
<div class="a" style="left:1229px;top:172px;width:7px;height:1px;background:#8b1a1a"></div>
<div class="a " style="right:645px;top:165px;color:#ff2020;font-size:12.5px">3.000</div>

<div class="a" style="left:1229px;top:200px;width:7px;height:1px;background:#8b1a1a"></div>
<div class="a " style="right:645px;top:193px;color:#ff2020;font-size:12.5px">2.750</div>
<div class="a" style="left:641px;top:226px;width:588px;height:1px;background:repeating-linear-gradient(90deg,#9a1c1c 0 1px,transparent 1px 4px)"></div>
<div class="a" style="left:1229px;top:226px;width:7px;height:1px;background:#8b1a1a"></div>
<div class="a " style="right:645px;top:219px;color:#ff2020;font-size:12.5px">2.500</div>
<div class="a" style="left:1229px;top:186px;width:4px;height:1px;background:#8b1a1a"></div>
<div class="a" style="left:1229px;top:214px;width:4px;height:1px;background:#8b1a1a"></div>
<div class="a" style="left:1229px;top:106px;width:1px;height:125px;background:#5a1212"></div>
<div class="a th" style="left:1281px;top:107px;"><i>代</i><i>码</i></div>
<div class="a th" style="left:1349px;top:107px;"><i>名</i><i>称</i></div>
<div class="a th" style="right:408px;top:107px;"><i>权</i><i>重</i>%</div>
<div class="a th" style="right:340px;top:107px;"><i>幅</i><i>度</i>%</div>
<div class="a th" style="right:268px;top:107px;"><i>最</i><i>新</i></div>
<div class="a th" style="right:204px;top:107px;"><i>涨</i><i>跌</i></div>
<div class="a th" style="right:133px;top:107px;"><i>买</i><i>价</i></div>
<div class="a th" style="right:53px;top:107px;"><i>卖</i><i>价</i></div>
<div class="a th" style="left:1896px;top:107px;"><i>总</i><i>量</i></div>
<div class="a" style="left:1281px;top:129px;width:624px;height:21px;background:#0e3a6e;border:1px solid #1f7ad8"></div>
<div class="a num w" style="left:1284px;top:130px;">600519</div>
<div class="a nm w" style="left:1350px;top:128px;font-size:16px"><i>贵</i><i>州</i><i>茅</i><i>台</i><span style="color:#ff3030;font-size:8px;font-weight:bold;margin-left:1px;position:relative;top:-1px">R</span></div>
<div class="a num w" style="right:408px;top:130px;">16.7398</div>
<div class="a num g" style="right:340px;top:130px;">-0.24</div>
<div class="a num g" style="right:268px;top:130px;">1839.40</div>
<div class="a num g" style="right:204px;top:130px;">-4.39</div>
<div class="a num g" style="right:133px;top:130px;">1839.39</div>
<div class="a num g" style="right:53px;top:130px;">1839.40</div>
<div class="a num y" style="left:1879px;top:130px;">1723</div>
<div class="a num w" style="left:1284px;top:152px;">600036</div>
<div class="a nm w" style="left:1350px;top:150px;font-size:16px"><i>招</i><i>商</i><i>银</i><i>行</i><span style="color:#ff3030;font-size:8px;font-weight:bold;margin-left:1px;position:relative;top:-1px">R</span></div>
<div class="a num w" style="right:408px;top:152px;">6.8038</div>
<div class="a num g" style="right:340px;top:152px;">-2.24</div>
<div class="a num g" style="right:268px;top:152px;">37.15</div>
<div class="a num g" style="right:204px;top:152px;">-0.85</div>
<div class="a num g" style="right:133px;top:152px;">37.14</div>
<div class="a num g" style="right:53px;top:152px;">37.15</div>
<div class="a num y" style="left:1879px;top:152px;">752</div>
<div class="a num w" style="left:1284px;top:174px;">601318</div>
<div class="a nm w" style="left:1350px;top:172px;font-size:16px"><i>中</i><i>国</i><i>平</i><i>安</i><span style="color:#ff3030;font-size:8px;font-weight:bold;margin-left:1px;position:relative;top:-1px">R</span></div>
<div class="a num w" style="right:408px;top:174px;">7.8201</div>
<div class="a num g" style="right:340px;top:174px;">-2.18</div>
<div class="a num g" style="right:268px;top:174px;">48.81</div>
<div class="a num g" style="right:204px;top:174px;">-1.09</div>
<div class="a num g" style="right:133px;top:174px;">48.81</div>
<div class="a num g" style="right:53px;top:174px;">48.82</div>
<div class="a num y" style="left:1879px;top:174px;">442</div>
<div class="a num w" style="left:1284px;top:196px;">601012</div>
<div class="a nm w" style="left:1350px;top:194px;font-size:16px"><i>隆</i><i>基</i><i>绿</i><i>能</i><span style="color:#ff3030;font-size:8px;font-weight:bold;margin-left:1px;position:relative;top:-1px">R</span></div>
<div class="a num w" style="right:408px;top:196px;">3.9856</div>
<div class="a num g" style="right:340px;top:196px;">-0.48</div>
<div class="a num g" style="right:268px;top:196px;">45.22</div>
<div class="a num g" style="right:204px;top:196px;">-0.22</div>
<div class="a num g" style="right:133px;top:196px;">45.21</div>
<div class="a num g" style="right:53px;top:196px;">45.22</div>
<div class="a num y" style="left:1879px;top:196px;">547</div>
<div class="a num w" style="left:1284px;top:218px;">601166</div>
<div class="a nm w" style="left:1350px;top:216px;font-size:16px"><i>兴</i><i>业</i><i>银</i><i>行</i><span style="color:#ff3030;font-size:8px;font-weight:bold;margin-left:1px;position:relative;top:-1px">R</span></div>
<div class="a num w" style="right:408px;top:218px;">3.5868</div>
<div class="a num g" style="right:340px;top:218px;">-0.41</div>
<div class="a num g" style="right:268px;top:218px;">16.98</div>
<div class="a num g" style="right:204px;top:218px;">-0.07</div>
<div class="a num g" style="right:133px;top:218px;">16.97</div>
<div class="a num g" style="right:53px;top:218px;">16.98</div>
<div class="a num y" style="left:1879px;top:218px;">401</div>
<div class="a" style="left:1903px;top:123px;width:15px;height:108px;background:#000;border-left:1px solid #2c2e32;border-top:1px solid #2c2e32"></div>
<svg class="a" style="left:1905px;top:127px" width="11" height="6"><path d="M1 5 L5.5 1 L10 5Z" fill="#3a3c40"/></svg>
<div class="a" style="left:1905px;top:137px;width:12px;height:52px;background:#2e3034;border-radius:3px"></div>
<div id="dlgwrap">
<div class="a" style="left:35px;top:231px;width:1862px;height:777px;background:#fff"></div>
<div class="a" style="left:43px;top:238px;font-size:12px;color:#111"><i>交</i><i>易</i></div>
<div class="a" style="left:35px;top:261px;width:1862px;height:29px;background:#e8edf4;border-top:2px solid #ececec"></div><div class="a" style="left:35px;top:290px;width:2px;height:718px;background:#e6ebf2"></div>
<div class="a" style="left:37px;top:266px;width:155px;height:20px;background:#e4e4e4;border:1px solid #aaa"></div>
<svg class="a" style="left:180px;top:271px" width="10" height="8"><path d="M1 2 L5 6 L9 2" stroke="#555" stroke-width="1.2" fill="none"/></svg>
<svg class="a" style="left:34px;top:260px" width="152" height="30"><path d="M16 4 C50 3 100 1 132 2 Q148 3 148 15 Q147 26 132 26 C100 26 70 28 40 28 L16 28 Q2 28 2 16 Q2 4 16 4 Z" fill="#4146c8"/></svg>
<div class="a" style="left:214px;top:268px;font-size:13px;color:#111"><i>净</i><i>资</i><i>产</i>:</div>
<div class="a" style="left:333px;top:268px;font-size:13px;color:#111"><i>可</i><i>用</i><i>保</i><i>证</i><i>金</i>:</div>
<div class="a" style="left:478px;top:268px;font-size:13px;color:#111"><i>已</i><i>用</i><i>保</i><i>证</i><i>金</i>:</div>
<div class="a" style="left:597px;top:268px;font-size:13px;color:#111"><i>估</i><i>算</i><i>浮</i><i>盈</i>:</div>
<div class="a" style="left:705px;top:268px;font-size:13px;color:#111"><i>风</i><i>险</i><i>度</i>:</div>
<div class="a" style="left:265px;top:270px;font-family:'Liberation Mono',monospace;font-size:11px;letter-spacing:-0.6px;color:#111">65216.65</div>
<div class="a" style="left:409px;top:270px;font-family:'Liberation Mono',monospace;font-size:11px;letter-spacing:-0.6px;color:#111">65216.65</div>
<div class="a" style="left:553px;top:270px;font-family:'Liberation Mono',monospace;font-size:11px;letter-spacing:-0.6px;color:#111">0.00</div>
<div class="a" style="left:661px;top:270px;font-family:'Liberation Mono',monospace;font-size:11px;letter-spacing:-0.6px;color:#111">0.00</div>
<div class="a" style="left:758px;top:270px;font-family:'Liberation Mono',monospace;font-size:11px;letter-spacing:-0.6px;color:#111">0</div>
<div class="a" style="left:1648px;top:266px;font-size:15px;font-weight:bold;color:#e8141a"><i>正</i><i>式</i><i>交</i><i>易</i></div>
<svg class="a" style="left:1760px;top:269px" width="136" height="16"><g transform="translate(8,8)"><circle r="3.8" fill="none" stroke="#333" stroke-width="2.6"/><rect x="-1.3" y="-6.2" width="2.6" height="2.6" fill="#333" transform="rotate(0)"/><rect x="-1.3" y="-6.2" width="2.6" height="2.6" fill="#333" transform="rotate(45)"/><rect x="-1.3" y="-6.2" width="2.6" height="2.6" fill="#333" transform="rotate(90)"/><rect x="-1.3" y="-6.2" width="2.6" height="2.6" fill="#333" transform="rotate(135)"/><rect x="-1.3" y="-6.2" width="2.6" height="2.6" fill="#333" transform="rotate(180)"/><rect x="-1.3" y="-6.2" width="2.6" height="2.6" fill="#333" transform="rotate(225)"/><rect x="-1.3" y="-6.2" width="2.6" height="2.6" fill="#333" transform="rotate(270)"/><rect x="-1.3" y="-6.2" width="2.6" height="2.6" fill="#333" transform="rotate(315)"/></g><rect x="23.5" y="6" width="10" height="8.5" fill="none" stroke="#333" stroke-width="1.2"/><path d="M25.5 6 V3.5 Q25.5 2 27 2 H30 Q31.5 2 31.5 3.5 V6" fill="none" stroke="#333" stroke-width="1.2"/><rect x="28" y="9" width="1.2" height="3" fill="#333"/><path d="M54.5 7.5 A6.3 6.3 0 1 1 50 2" fill="none" stroke="#333" stroke-width="1.1"/><path d="M52 5.5 L57.5 5.5 L54.8 9 Z" fill="#333"/><path d="M63 10 L68.5 3.5 L74 10 Z" fill="#333"/><rect x="63" y="11.5" width="11" height="2" fill="#333"/><rect x="83" y="9.5" width="10" height="1.8" fill="#333"/><rect x="103.5" y="5.5" width="7" height="8.5" fill="none" stroke="#333" stroke-width="1.3"/><path d="M106.5 5.5 V2.5 H114 V10 H110.5" fill="none" stroke="#333" stroke-width="1.3"/><path d="M124 4.5 L133 13 M133 4.5 L124 13" stroke="#333" stroke-width="2.6"/></svg>
<div class="a" style="left:41px;top:291px;width:140px;height:716px;border:1px solid #c4cede;background:#fff"></div>
<div class="a" style="left:62px;top:293px;font-size:12px;line-height:18px;color:#111"><i>交</i>&nbsp;&nbsp;&nbsp;&nbsp;&nbsp;&nbsp;&nbsp;<i>易</i></div>
<div class="a" style="left:62px;top:313px;font-size:12px;line-height:18px;color:#111"><i>当</i><i>日</i><i>委</i><i>托</i></div>
<div class="a" style="left:62px;top:334px;width:48px;height:16px;background:#2a78e0"></div>
<div class="a" style="left:62px;top:333px;font-size:12px;line-height:18px;color:#fff"><i>当</i><i>日</i><i>成</i><i>交</i></div>
<div class="a" style="left:62px;top:353px;font-size:12px;line-height:18px;color:#111"><i>持</i>&nbsp;&nbsp;&nbsp;&nbsp;&nbsp;&nbsp;&nbsp;<i>仓</i></div>
<div class="a" style="left:62px;top:373px;font-size:12px;line-height:18px;color:#111"><i>篮</i><i>子</i><i>委</i><i>托</i></div>
<div class="a" style="left:62px;top:393px;font-size:12px;line-height:18px;color:#111"><i>条</i><span style="margin-left:6px"><i>件</i></span><span style="margin-left:6px"><i>单</i></span></div>
<div class="a" style="left:62px;top:413px;font-size:12px;line-height:18px;color:#111"><i>策</i><i>略</i><i>保</i><i>证</i><i>金</i></div>
<div class="a" style="left:62px;top:433px;font-size:12px;line-height:18px;color:#111"><i>行</i>&nbsp;&nbsp;&nbsp;&nbsp;&nbsp;&nbsp;&nbsp;<i>权</i></div>
<div class="a" style="left:62px;top:453px;font-size:12px;line-height:18px;color:#111"><i>指</i><i>派</i><i>查</i><i>询</i></div>
<div class="a" style="left:62px;top:473px;font-size:12px;line-height:18px;color:#111"><i>锁</i><i>定</i><i>解</i><i>锁</i></div>
<div class="a" style="left:62px;top:493px;font-size:12px;line-height:18px;color:#111"><i>组</i>&nbsp;&nbsp;&nbsp;&nbsp;&nbsp;&nbsp;&nbsp;<i>合</i></div>
<div class="a" style="left:62px;top:513px;font-size:12px;line-height:18px;color:#111"><i>查</i>&nbsp;&nbsp;&nbsp;&nbsp;&nbsp;&nbsp;&nbsp;<i>询</i></div>
<div class="a" style="left:62px;top:533px;font-size:12px;line-height:18px;color:#111"><i>参</i><i>数</i><i>设</i><i>置</i></div>
<div class="a" style="left:62px;top:553px;font-size:12px;line-height:18px;color:#111"><i>银</i><i>衍</i><i>转</i><i>账</i></div>
<div class="a" style="left:62px;top:573px;font-size:12px;line-height:18px;color:#111"><i>修</i><i>改</i><i>密</i><i>码</i></div>
<svg class="a" style="left:48px;top:296px" width="13" height="13"><rect x="0.5" y="0.5" width="11" height="11" fill="none" stroke="#666"/><path d="M6 2.5 V9.5 M2.5 6 H9.5" stroke="#333"/></svg>
<svg class="a" style="left:48px;top:316px" width="13" height="13"><circle cx="4" cy="4" r="2.5" fill="none" stroke="#333"/><path d="M0.5 11 Q4 5 7.5 11 Z" fill="none" stroke="#333"/><circle cx="8.5" cy="4.5" r="2" fill="none" stroke="#333"/><path d="M8 11 H11.5 Q10 7 8 7.5" fill="none" stroke="#333"/></svg>
<svg class="a" style="left:48px;top:336px" width="13" height="13"><circle cx="6" cy="6" r="5.5" fill="none" stroke="#333"/><text x="6" y="9.5" font-size="9" text-anchor="middle" fill="#333" font-family="Liberation Sans">¥</text></svg>
<svg class="a" style="left:48px;top:356px" width="13" height="13"><circle cx="6" cy="6" r="5.5" fill="none" stroke="#333"/><circle cx="6" cy="6" r="3" fill="none" stroke="#333"/><path d="M6 1V11M1 6H11" stroke="#333" stroke-width="0.8"/></svg>
<svg class="a" style="left:48px;top:376px" width="13" height="13"><circle cx="4" cy="4" r="2.5" fill="none" stroke="#333"/><path d="M0.5 11 Q4 5 7.5 11 Z" fill="none" stroke="#333"/><circle cx="8.5" cy="4.5" r="2" fill="none" stroke="#333"/><path d="M8 11 H11.5 Q10 7 8 7.5" fill="none" stroke="#333"/></svg>
<svg class="a" style="left:48px;top:396px" width="13" height="13"><rect x="0.5" y="0.5" width="11" height="11" fill="none" stroke="#333"/><path d="M3 3.5H9M3 6H9M3 8.5H9" stroke="#333"/></svg>
<svg class="a" style="left:48px;top:416px" width="13" height="13"><rect x="0.5" y="0.5" width="11" height="11" fill="none" stroke="#666"/><path d="M6 2.5 V9.5 M2.5 6 H9.5" stroke="#333"/></svg>
<svg class="a" style="left:48px;top:436px" width="13" height="13"><rect x="0.5" y="0.5" width="11" height="11" fill="none" stroke="#666"/><path d="M6 2.5 V9.5 M2.5 6 H9.5" stroke="#333"/></svg>
<svg class="a" style="left:48px;top:456px" width="13" height="13"><path d="M0.5 0.5H11V5M0.5 0.5V11.5H5" fill="none" stroke="#333"/><circle cx="7.5" cy="7.5" r="2.5" fill="none" stroke="#333"/><path d="M9.5 9.5L11.5 11.5" stroke="#333"/></svg>
<svg class="a" style="left:48px;top:476px" width="13" height="13"><rect x="0.5" y="4.5" width="11" height="7" fill="none" stroke="#333"/><path d="M3 4.5V2.5A3 2 0 0 1 9 2.5V4.5M6 7V9" fill="none" stroke="#333"/></svg>
<svg class="a" style="left:48px;top:496px" width="13" height="13"><circle cx="6" cy="6" r="5.5" fill="none" stroke="#333"/><path d="M6 6V0.5M6 6H11.5" stroke="#333"/></svg>
<svg class="a" style="left:48px;top:516px" width="13" height="13"><circle cx="5" cy="5" r="4" fill="none" stroke="#333" stroke-width="1.2"/><path d="M8 8L11.5 11.5" stroke="#333" stroke-width="1.2"/></svg>
<svg class="a" style="left:48px;top:536px" width="13" height="13"><circle cx="6" cy="6" r="2.5" fill="none" stroke="#333"/><circle cx="6" cy="6" r="5" fill="none" stroke="#333" stroke-dasharray="2 1.2"/></svg>
<svg class="a" style="left:48px;top:556px" width="13" height="13"><circle cx="6" cy="6" r="5.5" fill="none" stroke="#333"/><text x="6" y="9.5" font-size="9" text-anchor="middle" fill="#333" font-family="Liberation Sans">¥</text></svg>
<svg class="a" style="left:48px;top:576px" width="13" height="13"><circle cx="8.5" cy="7.5" r="2.5" fill="none" stroke="#333"/><path d="M1 2L6.5 6M2 5L3 4" stroke="#333"/></svg>
<div class="a" style="left:196px;top:300px;font-size:12px;color:#111"><i>合</i><i>约</i>:</div>
<div class="a" style="left:232px;top:299px;width:102px;height:20px;background:#f8f5f0;border:1px solid #c9d0dc"></div>
<div class="a" style="left:314px;top:300px;width:19px;height:18px;background:#fff"></div>
<svg class="a" style="left:319px;top:306px" width="10" height="7"><path d="M1 1.5 L5 5 L9 1.5" stroke="#333" stroke-width="1.3" fill="none"/></svg>
<div class="a" style="left:196px;top:326px;font-size:12px;color:#111"><i>开</i><i>平</i>:</div>
<svg class="a" style="left:233px;top:329px" width="12" height="12"><circle cx="6" cy="6" r="4.5" fill="none" stroke="#8a96a4" stroke-width="2.4"/></svg>
<div class="a" style="left:246px;top:326px;font-size:12px;font-weight:bold;color:#222"><i>开</i><i>仓</i></div>
<svg class="a" style="left:289px;top:329px" width="12" height="12"><circle cx="6" cy="6" r="4.5" fill="none" stroke="#9aa4b0" stroke-width="1"/></svg>
<div class="a" style="left:302px;top:326px;font-size:12px;font-weight:bold;color:#1a6fd0"><i>平</i><i>仓</i></div>
<div class="a" style="left:359px;top:328px;width:10px;height:11px;border:1px solid #9aa4b0;border-radius:1px"></div>
<div class="a" style="left:373px;top:326px;font-size:12px;font-weight:bold;color:#e8141a"><i>净</i><i>仓</i></div>
<div class="a" style="left:196px;top:353px;width:10px;height:11px;border:1px solid #9aa4b0;border-radius:1px"></div>
<div class="a" style="left:210px;top:351px;font-size:12px;font-weight:bold;color:#222"><i>备</i><i>兑</i></div>
<div class="a" style="left:254px;top:351px;font-size:12px;color:#111"><i>合</i><i>约</i><i>单</i><i>位</i>:</div>
<div class="a" style="left:359px;top:353px;width:10px;height:11px;border:1px solid #9aa4b0;border-radius:1px"></div>
<div class="a" style="left:373px;top:352px;font-family:'Liberation Serif',serif;font-size:10px;color:#222">FOK</div>
<div class="a" style="left:196px;top:377px;font-size:12px;color:#111"><i>价</i><i>格</i></div>
<div class="a" style="left:232px;top:376px;width:102px;height:19px;background:#fff;border:1px solid #c9d0dc"></div>
<div class="a" style="left:233px;top:377px;width:17px;height:17px;background:#f4f6f9"></div>
<div class="a" style="left:316px;top:377px;width:17px;height:17px;background:#f4f6f9"></div>
<div class="a" style="left:238px;top:385px;width:9px;height:1px;background:#666"></div>
<div class="a" style="left:321px;top:385px;width:9px;height:1px;background:#666"></div><div class="a" style="left:325px;top:381px;width:1px;height:9px;background:#666"></div>
<div class="a" style="left:251px;top:377px;font-size:12px;color:#111"><i>对</i><i>手</i><i>价</i></div>
<div class="a" style="left:340px;top:377px;font-size:12px;color:#111"><i>元</i></div>
<div class="a btn" style="left:359px;top:375px;width:50px;height:20px"><i>复</i>&nbsp;<i>位</i></div>
<div class="a" style="left:196px;top:404px;font-size:12px;color:#111"><i>数</i><i>量</i></div>
<div class="a" style="left:232px;top:403px;width:102px;height:19px;background:#fff;border:1px solid #c9d0dc"></div>
<div class="a" style="left:233px;top:404px;width:17px;height:17px;background:#f4f6f9"></div>
<div class="a" style="left:316px;top:404px;width:17px;height:17px;background:#f4f6f9"></div>
<div class="a" style="left:238px;top:412px;width:9px;height:1px;background:#666"></div>
<div class="a" style="left:321px;top:412px;width:9px;height:1px;background:#666"></div><div class="a" style="left:325px;top:408px;width:1px;height:9px;background:#666"></div>
<div class="a" style="left:340px;top:404px;font-size:12px;color:#111"><i>张</i></div>
<div class="a btn" style="left:359px;top:402px;width:50px;height:20px"><i>查</i><i>可</i><i>开</i></div>
<div class="a" style="left:196px;top:441px;width:10px;height:11px;border:1px solid #9aa4b0;border-radius:1px"></div>
<div class="a" style="left:210px;top:439px;font-size:12px;color:#111;color:#333"><i>自</i><i>动</i><i>止</i><i>盈</i></div>
<div class="a" style="left:270px;top:441px;width:10px;height:11px;border:1px solid #9aa4b0;border-radius:1px"></div>
<div class="a" style="left:283px;top:439px;font-size:12px;color:#111;color:#333"><i>自</i><i>动</i><i>止</i><i>损</i></div>
<div class="a btn" style="left:360px;top:436px;width:50px;height:19px"><i>设</i>&nbsp;<i>置</i></div>
<div class="a" style="left:197px;top:472px;width:82px;height:54px;background:#e8545a;border-radius:3px"></div>
<div class="a" style="left:211px;top:489px;width:54px;height:1px;background:#fff"></div>
<div class="a" style="left:210px;top:491px;font-size:28px;line-height:34px;color:#fff;font-family:'Liberation Serif',serif"><i>买</i><i>入</i></div>
<div class="a" style="left:304px;top:472px;width:82px;height:54px;background:#5599ee;border-radius:3px"></div>
<div class="a" style="left:318px;top:489px;width:54px;height:1px;background:#fff"></div>
<div class="a" style="left:317px;top:491px;font-size:28px;line-height:34px;color:#fff;font-family:'Liberation Serif',serif"><i>卖</i><i>出</i></div>
<div class="a" style="left:470px;top:295px;width:8px;height:261px;border:1px solid #c4cede;border-radius:3px;background:#fff"></div>
<div class="a" style="left:471px;top:418px;font-size:11px;color:#333">&gt;</div>
<div class="a" style="left:488px;top:316px;width:21px;height:688px;border:1px solid #c4cede;border-radius:3px;background:#fff"></div>
<div class="a" style="left:491px;top:521px;font-size:13px;color:#111"><i>成</i></div>
<div class="a" style="left:491px;top:784px;font-size:13px;color:#111"><i>交</i></div>
<svg class="a" style="left:513px;top:298px" width="12" height="12"><circle cx="6" cy="6" r="4" fill="none" stroke="#8a96a4" stroke-width="2.6"/></svg>
<div class="a" style="left:527px;top:296px;font-size:12px;font-weight:bold;color:#8e98a4"><i>成</i><i>交</i><i>明</i><i>细</i></div>
<svg class="a" style="left:609px;top:298px" width="12" height="12"><circle cx="6" cy="6" r="4.5" fill="none" stroke="#9aa4b0" stroke-width="1"/></svg>
<div class="a" style="left:622px;top:296px;font-size:12px;font-weight:bold;color:#9aa4b0"><i>按</i><i>合</i><i>约</i><i>汇</i><i>总</i></div>
<svg class="a" style="left:705px;top:298px" width="12" height="12"><circle cx="6" cy="6" r="4.5" fill="none" stroke="#9aa4b0" stroke-width="1"/></svg>
<div class="a" style="left:718px;top:296px;font-size:12px;font-weight:bold;color:#9aa4b0"><i>按</i><i>委</i><i>托</i><i>汇</i><i>总</i></div>
<div class="a btn" style="left:1826px;top:292px;width:60px;height:19px;border-color:#cdd5e0"><i>筛</i><i>选</i></div>
<div class="a" style="left:1892px;top:291px;width:5px;height:716px;background:#e8eef5"></div>
<div class="a" style="left:513px;top:319px;width:1372px;height:685px;border:1px solid #a8b0b8;border-top:1px solid #9a9ea4;background:#fff"></div>
<div class="a" style="left:514px;top:320px;width:1370px;height:21px;background:#e8edf4;border-top:1px solid #d8dde4"></div>
<div class="a" style="left:583px;top:321px;width:1px;height:394px;background:#c8d4e2"></div>
<div class="a" style="left:683px;top:321px;width:1px;height:394px;background:#c8d4e2"></div>
<div class="a" style="left:753px;top:321px;width:1px;height:394px;background:#c8d4e2"></div>
<div class="a" style="left:953px;top:321px;width:1px;height:394px;background:#c8d4e2"></div>
<div class="a" style="left:1013px;top:321px;width:1px;height:394px;background:#c8d4e2"></div>
<div class="a" style="left:1073px;top:321px;width:1px;height:394px;background:#c8d4e2"></div>
<div class="a" style="left:1143px;top:321px;width:1px;height:394px;background:#c8d4e2"></div>
<div class="a" style="left:1213px;top:321px;width:1px;height:394px;background:#c8d4e2"></div>
<div class="a" style="left:1313px;top:321px;width:1px;height:394px;background:#c8d4e2"></div>
<div class="a" style="left:1383px;top:321px;width:1px;height:394px;background:#c8d4e2"></div>
<div class="a" style="left:1473px;top:321px;width:1px;height:394px;background:#c8d4e2"></div>
<div class="a" style="left:1543px;top:321px;width:1px;height:394px;background:#c8d4e2"></div>
<div class="a" style="left:1603px;top:321px;width:1px;height:394px;background:#c8d4e2"></div>
<div class="a" style="left:1683px;top:321px;width:1px;height:394px;background:#c8d4e2"></div>
<div class="a" style="left:1753px;top:321px;width:1px;height:394px;background:#c8d4e2"></div>
<div class="a" style="left:1823px;top:321px;width:1px;height:394px;background:#c8d4e2"></div>
<div class="a" style="left:514px;top:341px;width:1370px;height:1px;background:#c8d4e2"></div>
<div class="a" style="left:514px;top:363px;width:1370px;height:1px;background:#c8d4e2"></div>
<div class="a" style="left:514px;top:385px;width:1370px;height:1px;background:#c8d4e2"></div>
<div class="a" style="left:514px;top:407px;width:1370px;height:1px;background:#c8d4e2"></div>
<div class="a" style="left:514px;top:429px;width:1370px;height:1px;background:#c8d4e2"></div>
<div class="a" style="left:514px;top:451px;width:1370px;height:1px;background:#c8d4e2"></div>
<div class="a" style="left:514px;top:473px;width:1370px;height:1px;background:#c8d4e2"></div>
<div class="a" style="left:514px;top:495px;width:1370px;height:1px;background:#c8d4e2"></div>
<div class="a" style="left:514px;top:517px;width:1370px;height:1px;background:#c8d4e2"></div>
<div class="a" style="left:514px;top:539px;width:1370px;height:1px;background:#c8d4e2"></div>
<div class="a" style="left:514px;top:561px;width:1370px;height:1px;background:#c8d4e2"></div>
<div class="a" style="left:514px;top:583px;width:1370px;height:1px;background:#c8d4e2"></div>
<div class="a" style="left:514px;top:605px;width:1370px;height:1px;background:#c8d4e2"></div>
<div class="a" style="left:514px;top:627px;width:1370px;height:1px;background:#c8d4e2"></div>
<div class="a" style="left:514px;top:649px;width:1370px;height:1px;background:#c8d4e2"></div>
<div class="a" style="left:514px;top:671px;width:1370px;height:1px;background:#c8d4e2"></div>
<div class="a" style="left:514px;top:693px;width:1370px;height:1px;background:#c8d4e2"></div>
<div class="a" style="left:514px;top:715px;width:1370px;height:1px;background:#c8d4e2"></div>
<div class="a" style="left:513px;top:323px;width:70px;text-align:center;font-size:12px;color:#111"><i>成</i><i>交</i><i>时</i><i>间</i></div>
<div class="a" style="left:583px;top:323px;width:100px;text-align:center;font-size:12px;color:#111"><i>市</i><i>场</i><i>名</i><i>称</i></div>
<div class="a" style="left:683px;top:323px;width:70px;text-align:center;font-size:12px;color:#111"><i>合</i><i>约</i><i>代</i><i>码</i></div>
<div class="a" style="left:753px;top:323px;width:200px;text-align:center;font-size:12px;color:#111"><i>合</i><i>约</i><i>名</i><i>称</i></div>
<div class="a" style="left:953px;top:323px;width:60px;text-align:center;font-size:12px;color:#111"><i>买</i><i>卖</i></div>
<div class="a" style="left:1013px;top:323px;width:60px;text-align:center;font-size:12px;color:#111"><i>开</i><i>平</i></div>
<div class="a" style="left:1073px;top:323px;width:70px;text-align:center;font-size:12px;color:#111"><i>成</i><i>交</i><i>价</i><i>格</i></div>
<div class="a" style="left:1143px;top:323px;width:70px;text-align:center;font-size:12px;color:#111"><i>成</i><i>交</i><i>数</i><i>量</i></div>
<div class="a" style="left:1213px;top:323px;width:100px;text-align:center;font-size:12px;color:#111"><i>委</i><i>托</i><i>价</i><i>格</i></div>
<div class="a" style="left:1313px;top:323px;width:70px;text-align:center;font-size:12px;color:#111"><i>委</i><i>托</i><i>数</i><i>量</i></div>
<div class="a" style="left:1383px;top:323px;width:90px;text-align:center;font-size:12px;color:#111"><i>成</i><i>交</i><i>金</i><i>额</i></div>
<div class="a" style="left:1473px;top:323px;width:70px;text-align:center;font-size:12px;color:#111"><i>合</i><i>约</i><i>类</i><i>别</i></div>
<div class="a" style="left:1543px;top:323px;width:60px;text-align:center;font-size:12px;color:#111"><i>备</i><i>兑</i></div>
<div class="a" style="left:1603px;top:323px;width:80px;text-align:center;font-size:12px;color:#111"><i>委</i><i>托</i><i>号</i></div>
<div class="a" style="left:1683px;top:323px;width:70px;text-align:center;font-size:12px;color:#111"><i>委</i><i>托</i><i>时</i><i>间</i></div>
<div class="a" style="left:1753px;top:323px;width:70px;text-align:center;font-size:12px;color:#111"><i>成</i><i>交</i><i>号</i></div>
<div class="a" style="left:1881px;top:323px;width:4px;overflow:hidden;font-size:12px;color:#111"><i>徝</i></div>
<div class="a" style="left:513px;top:346px;width:70px;text-align:center;font-family:'Liberation Mono',monospace;font-size:11px;letter-spacing:-0.6px;color:#111">14:44:13</div>
<div class="a" style="left:583px;top:344px;width:100px;text-align:center;font-size:12px;color:#111"><i>上</i><i>海</i><i>股</i><i>票</i><i>期</i><i>权</i></div>
<div class="a" style="left:683px;top:345px;width:70px;text-align:center;font-weight:bold;font-size:12px;color:#1e74d0">10004955</div>
<div class="a" style="left:753px;top:344px;width:200px;text-align:center;font-size:12px;color:#2f86d8"><span style="font-family:'Liberation Serif',serif;font-size:11.5px">50ETF</span><i>沽</i>2<i>月</i>2800</div>
<div class="a" style="left:953px;top:344px;width:60px;text-align:center;font-size:12px;color:#e8141a"><i>买</i></div>
<div class="a" style="left:1013px;top:344px;width:60px;text-align:center;font-size:12px;color:#c040c8"><i>平</i><i>仓</i></div>
<div class="a" style="left:1073px;top:346px;width:67px;text-align:right;font-family:'Liberation Mono',monospace;font-size:11px;letter-spacing:-0.6px;color:#111">0.0490</div>
<div class="a" style="left:1143px;top:346px;width:67px;text-align:right;font-family:'Liberation Mono',monospace;font-size:11px;letter-spacing:-0.6px;color:#111">8</div>
<div class="a" style="left:1213px;top:346px;width:91px;text-align:right;font-family:'Liberation Mono',monospace;font-size:11px;letter-spacing:-0.6px;color:#111">0.0490</div>
<div class="a" style="left:1313px;top:346px;width:61px;text-align:right;font-family:'Liberation Mono',monospace;font-size:11px;letter-spacing:-0.6px;color:#111">8</div>
<div class="a" style="left:1383px;top:346px;width:87px;text-align:right;font-family:'Liberation Mono',monospace;font-size:11px;letter-spacing:-0.6px;color:#111">3920.00</div>
<div class="a" style="left:1473px;top:344px;width:70px;text-align:center;font-size:12px;color:#1a9a1a"><i>认</i><i>沽</i></div>
<div class="a" style="left:1543px;top:344px;width:60px;text-align:center;font-size:12px;color:#c040c8"><i>非</i><i>备</i><i>兑</i></div>
<div class="a" style="left:1603px;top:346px;width:77px;text-align:right;font-family:'Liberation Mono',monospace;font-size:11px;letter-spacing:-0.6px;color:#111">1772</div>
<div class="a" style="left:1683px;top:346px;width:70px;text-align:center;font-family:'Liberation Mono',monospace;font-size:11px;letter-spacing:-0.6px;color:#111">14:44:10</div>
<div class="a" style="left:1753px;top:346px;width:67px;text-align:right;font-family:'Liberation Mono',monospace;font-size:11px;letter-spacing:-0.6px;color:#111">670312</div>
<div class="a" style="left:1881px;top:344px;width:4px;overflow:hidden;font-size:12px;color:#111"><i>手</i></div>
<div class="a" style="left:513px;top:368px;width:70px;text-align:center;font-family:'Liberation Mono',monospace;font-size:11px;letter-spacing:-0.6px;color:#111">13:40:50</div>
<div class="a" style="left:583px;top:366px;width:100px;text-align:center;font-size:12px;color:#111"><i>上</i><i>海</i><i>股</i><i>票</i><i>期</i><i>权</i></div>
<div class="a" style="left:683px;top:367px;width:70px;text-align:center;font-weight:bold;font-size:12px;color:#1e74d0">10004955</div>
<div class="a" style="left:753px;top:366px;width:200px;text-align:center;font-size:12px;color:#2f86d8"><span style="font-family:'Liberation Serif',serif;font-size:11.5px">50ETF</span><i>沽</i>2<i>月</i>2800</div>
<div class="a" style="left:953px;top:366px;width:60px;text-align:center;font-size:12px;color:#e8141a"><i>买</i></div>
<div class="a" style="left:1013px;top:366px;width:60px;text-align:center;font-size:12px;color:#c040c8"><i>平</i><i>仓</i></div>
<div class="a" style="left:1073px;top:368px;width:67px;text-align:right;font-family:'Liberation Mono',monospace;font-size:11px;letter-spacing:-0.6px;color:#111">0.0465</div>
<div class="a" style="left:1143px;top:368px;width:67px;text-align:right;font-family:'Liberation Mono',monospace;font-size:11px;letter-spacing:-0.6px;color:#111">2</div>
<div class="a" style="left:1213px;top:368px;width:91px;text-align:right;font-family:'Liberation Mono',monospace;font-size:11px;letter-spacing:-0.6px;color:#111">0.0465</div>
<div class="a" style="left:1313px;top:368px;width:61px;text-align:right;font-family:'Liberation Mono',monospace;font-size:11px;letter-spacing:-0.6px;color:#111">5</div>
<div class="a" style="left:1383px;top:368px;width:87px;text-align:right;font-family:'Liberation Mono',monospace;font-size:11px;letter-spacing:-0.6px;color:#111">930.00</div>
<div class="a" style="left:1473px;top:366px;width:70px;text-align:center;font-size:12px;color:#1a9a1a"><i>认</i><i>沽</i></div>
<div class="a" style="left:1543px;top:366px;width:60px;text-align:center;font-size:12px;color:#c040c8"><i>非</i><i>备</i><i>兑</i></div>
<div class="a" style="left:1603px;top:368px;width:77px;text-align:right;font-family:'Liberation Mono',monospace;font-size:11px;letter-spacing:-0.6px;color:#111">1431</div>
<div class="a" style="left:1683px;top:368px;width:70px;text-align:center;font-family:'Liberation Mono',monospace;font-size:11px;letter-spacing:-0.6px;color:#111">13:40:38</div>
<div class="a" style="left:1753px;top:368px;width:67px;text-align:right;font-family:'Liberation Mono',monospace;font-size:11px;letter-spacing:-0.6px;color:#111">521374</div>
<div class="a" style="left:1881px;top:366px;width:4px;overflow:hidden;font-size:12px;color:#111"><i>手</i></div>
<div class="a" style="left:513px;top:390px;width:70px;text-align:center;font-family:'Liberation Mono',monospace;font-size:11px;letter-spacing:-0.6px;color:#111">13:40:48</div>
<div class="a" style="left:583px;top:388px;width:100px;text-align:center;font-size:12px;color:#111"><i>上</i><i>海</i><i>股</i><i>票</i><i>期</i><i>权</i></div>
<div class="a" style="left:683px;top:389px;width:70px;text-align:center;font-weight:bold;font-size:12px;color:#1e74d0">10004955</div>
<div class="a" style="left:753px;top:388px;width:200px;text-align:center;font-size:12px;color:#2f86d8"><span style="font-family:'Liberation Serif',serif;font-size:11.5px">50ETF</span><i>沽</i>2<i>月</i>2800</div>
<div class="a" style="left:953px;top:388px;width:60px;text-align:center;font-size:12px;color:#e8141a"><i>买</i></div>
<div class="a" style="left:1013px;top:388px;width:60px;text-align:center;font-size:12px;color:#c040c8"><i>平</i><i>仓</i></div>
<div class="a" style="left:1073px;top:390px;width:67px;text-align:right;font-family:'Liberation Mono',monospace;font-size:11px;letter-spacing:-0.6px;color:#111">0.0465</div>
<div class="a" style="left:1143px;top:390px;width:67px;text-align:right;font-family:'Liberation Mono',monospace;font-size:11px;letter-spacing:-0.6px;color:#111">2</div>
<div class="a" style="left:1213px;top:390px;width:91px;text-align:right;font-family:'Liberation Mono',monospace;font-size:11px;letter-spacing:-0.6px;color:#111">0.0465</div>
<div class="a" style="left:1313px;top:390px;width:61px;text-align:right;font-family:'Liberation Mono',monospace;font-size:11px;letter-spacing:-0.6px;color:#111">5</div>
<div class="a" style="left:1383px;top:390px;width:87px;text-align:right;font-family:'Liberation Mono',monospace;font-size:11px;letter-spacing:-0.6px;color:#111">930.00</div>
<div class="a" style="left:1473px;top:388px;width:70px;text-align:center;font-size:12px;color:#1a9a1a"><i>认</i><i>沽</i></div>
<div class="a" style="left:1543px;top:388px;width:60px;text-align:center;font-size:12px;color:#c040c8"><i>非</i><i>备</i><i>兑</i></div>
<div class="a" style="left:1603px;top:390px;width:77px;text-align:right;font-family:'Liberation Mono',monospace;font-size:11px;letter-spacing:-0.6px;color:#111">1431</div>
<div class="a" style="left:1683px;top:390px;width:70px;text-align:center;font-family:'Liberation Mono',monospace;font-size:11px;letter-spacing:-0.6px;color:#111">13:40:38</div>
<div class="a" style="left:1753px;top:390px;width:67px;text-align:right;font-family:'Liberation Mono',monospace;font-size:11px;letter-spacing:-0.6px;color:#111">521358</div>
<div class="a" style="left:1881px;top:388px;width:4px;overflow:hidden;font-size:12px;color:#111"><i>手</i></div>
<div class="a" style="left:513px;top:412px;width:70px;text-align:center;font-family:'Liberation Mono',monospace;font-size:11px;letter-spacing:-0.6px;color:#111">13:40:46</div>
<div class="a" style="left:583px;top:410px;width:100px;text-align:center;font-size:12px;color:#111"><i>上</i><i>海</i><i>股</i><i>票</i><i>期</i><i>权</i></div>
<div class="a" style="left:683px;top:411px;width:70px;text-align:center;font-weight:bold;font-size:12px;color:#1e74d0">10004955</div>
<div class="a" style="left:753px;top:410px;width:200px;text-align:center;font-size:12px;color:#2f86d8"><span style="font-family:'Liberation Serif',serif;font-size:11.5px">50ETF</span><i>沽</i>2<i>月</i>2800</div>
<div class="a" style="left:953px;top:410px;width:60px;text-align:center;font-size:12px;color:#e8141a"><i>买</i></div>
<div class="a" style="left:1013px;top:410px;width:60px;text-align:center;font-size:12px;color:#c040c8"><i>平</i><i>仓</i></div>
<div class="a" style="left:1073px;top:412px;width:67px;text-align:right;font-family:'Liberation Mono',monospace;font-size:11px;letter-spacing:-0.6px;color:#111">0.0465</div>
<div class="a" style="left:1143px;top:412px;width:67px;text-align:right;font-family:'Liberation Mono',monospace;font-size:11px;letter-spacing:-0.6px;color:#111">1</div>
<div class="a" style="left:1213px;top:412px;width:91px;text-align:right;font-family:'Liberation Mono',monospace;font-size:11px;letter-spacing:-0.6px;color:#111">0.0465</div>
<div class="a" style="left:1313px;top:412px;width:61px;text-align:right;font-family:'Liberation Mono',monospace;font-size:11px;letter-spacing:-0.6px;color:#111">5</div>
<div class="a" style="left:1383px;top:412px;width:87px;text-align:right;font-family:'Liberation Mono',monospace;font-size:11px;letter-spacing:-0.6px;color:#111">465.00</div>
<div class="a" style="left:1473px;top:410px;width:70px;text-align:center;font-size:12px;color:#1a9a1a"><i>认</i><i>沽</i></div>
<div class="a" style="left:1543px;top:410px;width:60px;text-align:center;font-size:12px;color:#c040c8"><i>非</i><i>备</i><i>兑</i></div>
<div class="a" style="left:1603px;top:412px;width:77px;text-align:right;font-family:'Liberation Mono',monospace;font-size:11px;letter-spacing:-0.6px;color:#111">1431</div>
<div class="a" style="left:1683px;top:412px;width:70px;text-align:center;font-family:'Liberation Mono',monospace;font-size:11px;letter-spacing:-0.6px;color:#111">13:40:38</div>
<div class="a" style="left:1753px;top:412px;width:67px;text-align:right;font-family:'Liberation Mono',monospace;font-size:11px;letter-spacing:-0.6px;color:#111">521331</div>
<div class="a" style="left:1881px;top:410px;width:4px;overflow:hidden;font-size:12px;color:#111"><i>手</i></div>
<div class="a" style="left:513px;top:434px;width:70px;text-align:center;font-family:'Liberation Mono',monospace;font-size:11px;letter-spacing:-0.6px;color:#111">13:27:50</div>
<div class="a" style="left:583px;top:432px;width:100px;text-align:center;font-size:12px;color:#111"><i>上</i><i>海</i><i>股</i><i>票</i><i>期</i><i>权</i></div>
<div class="a" style="left:683px;top:433px;width:70px;text-align:center;font-weight:bold;font-size:12px;color:#1e74d0">10004955</div>
<div class="a" style="left:753px;top:432px;width:200px;text-align:center;font-size:12px;color:#2f86d8"><span style="font-family:'Liberation Serif',serif;font-size:11.5px">50ETF</span><i>沽</i>2<i>月</i>2800</div>
<div class="a" style="left:953px;top:432px;width:60px;text-align:center;font-size:12px;color:#1a9a1a"><i>卖</i></div>
<div class="a" style="left:1013px;top:432px;width:60px;text-align:center;font-size:12px;color:#111"><i>开</i><i>仓</i></div>
<div class="a" style="left:1073px;top:434px;width:67px;text-align:right;font-family:'Liberation Mono',monospace;font-size:11px;letter-spacing:-0.6px;color:#111">0.0510</div>
<div class="a" style="left:1143px;top:434px;width:67px;text-align:right;font-family:'Liberation Mono',monospace;font-size:11px;letter-spacing:-0.6px;color:#111">5</div>
<div class="a" style="left:1213px;top:434px;width:91px;text-align:right;font-family:'Liberation Mono',monospace;font-size:11px;letter-spacing:-0.6px;color:#111">0.0510</div>
<div class="a" style="left:1313px;top:434px;width:61px;text-align:right;font-family:'Liberation Mono',monospace;font-size:11px;letter-spacing:-0.6px;color:#111">5</div>
<div class="a" style="left:1383px;top:434px;width:87px;text-align:right;font-family:'Liberation Mono',monospace;font-size:11px;letter-spacing:-0.6px;color:#111">2550.00</div>
<div class="a" style="left:1473px;top:432px;width:70px;text-align:center;font-size:12px;color:#1a9a1a"><i>认</i><i>沽</i></div>
<div class="a" style="left:1543px;top:432px;width:60px;text-align:center;font-size:12px;color:#c040c8"><i>非</i><i>备</i><i>兑</i></div>
<div class="a" style="left:1603px;top:434px;width:77px;text-align:right;font-family:'Liberation Mono',monospace;font-size:11px;letter-spacing:-0.6px;color:#111">1357</div>
<div class="a" style="left:1683px;top:434px;width:70px;text-align:center;font-family:'Liberation Mono',monospace;font-size:11px;letter-spacing:-0.6px;color:#111">13:27:49</div>
<div class="a" style="left:1753px;top:434px;width:67px;text-align:right;font-family:'Liberation Mono',monospace;font-size:11px;letter-spacing:-0.6px;color:#111">482815</div>
<div class="a" style="left:1881px;top:432px;width:4px;overflow:hidden;font-size:12px;color:#111"><i>手</i></div>
<div class="a" style="left:513px;top:456px;width:70px;text-align:center;font-family:'Liberation Mono',monospace;font-size:11px;letter-spacing:-0.6px;color:#111">11:04:18</div>
<div class="a" style="left:583px;top:454px;width:100px;text-align:center;font-size:12px;color:#111"><i>上</i><i>海</i><i>股</i><i>票</i><i>期</i><i>权</i></div>
<div class="a" style="left:683px;top:455px;width:70px;text-align:center;font-weight:bold;font-size:12px;color:#1e74d0">10004944</div>
<div class="a" style="left:753px;top:454px;width:200px;text-align:center;font-size:12px;color:#2f86d8"><span style="font-family:'Liberation Serif',serif;font-size:11.5px">50ETF</span><i>购</i>2<i>月</i>2700</div>
<div class="a" style="left:953px;top:454px;width:60px;text-align:center;font-size:12px;color:#1a9a1a"><i>卖</i></div>
<div class="a" style="left:1013px;top:454px;width:60px;text-align:center;font-size:12px;color:#c040c8"><i>平</i><i>仓</i></div>
<div class="a" style="left:1073px;top:456px;width:67px;text-align:right;font-family:'Liberation Mono',monospace;font-size:11px;letter-spacing:-0.6px;color:#111">0.0722</div>
<div class="a" style="left:1143px;top:456px;width:67px;text-align:right;font-family:'Liberation Mono',monospace;font-size:11px;letter-spacing:-0.6px;color:#111">7</div>
<div class="a" style="left:1213px;top:456px;width:91px;text-align:right;font-family:'Liberation Mono',monospace;font-size:11px;letter-spacing:-0.6px;color:#111">0.0722</div>
<div class="a" style="left:1313px;top:456px;width:61px;text-align:right;font-family:'Liberation Mono',monospace;font-size:11px;letter-spacing:-0.6px;color:#111">30</div>
<div class="a" style="left:1383px;top:456px;width:87px;text-align:right;font-family:'Liberation Mono',monospace;font-size:11px;letter-spacing:-0.6px;color:#111">5054.00</div>
<div class="a" style="left:1473px;top:454px;width:70px;text-align:center;font-size:12px;color:#e8141a"><i>认</i><i>购</i></div>
<div class="a" style="left:1543px;top:454px;width:60px;text-align:center;font-size:12px;color:#c040c8"><i>非</i><i>备</i><i>兑</i></div>
<div class="a" style="left:1603px;top:456px;width:77px;text-align:right;font-family:'Liberation Mono',monospace;font-size:11px;letter-spacing:-0.6px;color:#111">1010</div>
<div class="a" style="left:1683px;top:456px;width:70px;text-align:center;font-family:'Liberation Mono',monospace;font-size:11px;letter-spacing:-0.6px;color:#111">11:04:18</div>
<div class="a" style="left:1753px;top:456px;width:67px;text-align:right;font-family:'Liberation Mono',monospace;font-size:11px;letter-spacing:-0.6px;color:#111">358282</div>
<div class="a" style="left:1881px;top:454px;width:4px;overflow:hidden;font-size:12px;color:#111"><i>手</i></div>
<div class="a" style="left:513px;top:478px;width:70px;text-align:center;font-family:'Liberation Mono',monospace;font-size:11px;letter-spacing:-0.6px;color:#111">11:04:18</div>
<div class="a" style="left:583px;top:476px;width:100px;text-align:center;font-size:12px;color:#111"><i>上</i><i>海</i><i>股</i><i>票</i><i>期</i><i>权</i></div>
<div class="a" style="left:683px;top:477px;width:70px;text-align:center;font-weight:bold;font-size:12px;color:#1e74d0">10004944</div>
<div class="a" style="left:753px;top:476px;width:200px;text-align:center;font-size:12px;color:#2f86d8"><span style="font-family:'Liberation Serif',serif;font-size:11.5px">50ETF</span><i>购</i>2<i>月</i>2700</div>
<div class="a" style="left:953px;top:476px;width:60px;text-align:center;font-size:12px;color:#1a9a1a"><i>卖</i></div>
<div class="a" style="left:1013px;top:476px;width:60px;text-align:center;font-size:12px;color:#c040c8"><i>平</i><i>仓</i></div>
<div class="a" style="left:1073px;top:478px;width:67px;text-align:right;font-family:'Liberation Mono',monospace;font-size:11px;letter-spacing:-0.6px;color:#111">0.0722</div>
<div class="a" style="left:1143px;top:478px;width:67px;text-align:right;font-family:'Liberation Mono',monospace;font-size:11px;letter-spacing:-0.6px;color:#111">10</div>
<div class="a" style="left:1213px;top:478px;width:91px;text-align:right;font-family:'Liberation Mono',monospace;font-size:11px;letter-spacing:-0.6px;color:#111">0.0722</div>
<div class="a" style="left:1313px;top:478px;width:61px;text-align:right;font-family:'Liberation Mono',monospace;font-size:11px;letter-spacing:-0.6px;color:#111">30</div>
<div class="a" style="left:1383px;top:478px;width:87px;text-align:right;font-family:'Liberation Mono',monospace;font-size:11px;letter-spacing:-0.6px;color:#111">7220.00</div>
<div class="a" style="left:1473px;top:476px;width:70px;text-align:center;font-size:12px;color:#e8141a"><i>认</i><i>购</i></div>
<div class="a" style="left:1543px;top:476px;width:60px;text-align:center;font-size:12px;color:#c040c8"><i>非</i><i>备</i><i>兑</i></div>
<div class="a" style="left:1603px;top:478px;width:77px;text-align:right;font-family:'Liberation Mono',monospace;font-size:11px;letter-spacing:-0.6px;color:#111">1010</div>
<div class="a" style="left:1683px;top:478px;width:70px;text-align:center;font-family:'Liberation Mono',monospace;font-size:11px;letter-spacing:-0.6px;color:#111">11:04:18</div>
<div class="a" style="left:1753px;top:478px;width:67px;text-align:right;font-family:'Liberation Mono',monospace;font-size:11px;letter-spacing:-0.6px;color:#111">358281</div>
<div class="a" style="left:1881px;top:476px;width:4px;overflow:hidden;font-size:12px;color:#111"><i>手</i></div>
<div class="a" style="left:513px;top:500px;width:70px;text-align:center;font-family:'Liberation Mono',monospace;font-size:11px;letter-spacing:-0.6px;color:#111">11:04:18</div>
<div class="a" style="left:583px;top:498px;width:100px;text-align:center;font-size:12px;color:#111"><i>上</i><i>海</i><i>股</i><i>票</i><i>期</i><i>权</i></div>
<div class="a" style="left:683px;top:499px;width:70px;text-align:center;font-weight:bold;font-size:12px;color:#1e74d0">10004944</div>
<div class="a" style="left:753px;top:498px;width:200px;text-align:center;font-size:12px;color:#2f86d8"><span style="font-family:'Liberation Serif',serif;font-size:11.5px">50ETF</span><i>购</i>2<i>月</i>2700</div>
<div class="a" style="left:953px;top:498px;width:60px;text-align:center;font-size:12px;color:#1a9a1a"><i>卖</i></div>
<div class="a" style="left:1013px;top:498px;width:60px;text-align:center;font-size:12px;color:#c040c8"><i>平</i><i>仓</i></div>
<div class="a" style="left:1073px;top:500px;width:67px;text-align:right;font-family:'Liberation Mono',monospace;font-size:11px;letter-spacing:-0.6px;color:#111">0.0723</div>
<div class="a" style="left:1143px;top:500px;width:67px;text-align:right;font-family:'Liberation Mono',monospace;font-size:11px;letter-spacing:-0.6px;color:#111">6</div>
<div class="a" style="left:1213px;top:500px;width:91px;text-align:right;font-family:'Liberation Mono',monospace;font-size:11px;letter-spacing:-0.6px;color:#111">0.0722</div>
<div class="a" style="left:1313px;top:500px;width:61px;text-align:right;font-family:'Liberation Mono',monospace;font-size:11px;letter-spacing:-0.6px;color:#111">30</div>
<div class="a" style="left:1383px;top:500px;width:87px;text-align:right;font-family:'Liberation Mono',monospace;font-size:11px;letter-spacing:-0.6px;color:#111">4338.00</div>
<div class="a" style="left:1473px;top:498px;width:70px;text-align:center;font-size:12px;color:#e8141a"><i>认</i><i>购</i></div>
<div class="a" style="left:1543px;top:498px;width:60px;text-align:center;font-size:12px;color:#c040c8"><i>非</i><i>备</i><i>兑</i></div>
<div class="a" style="left:1603px;top:500px;width:77px;text-align:right;font-family:'Liberation Mono',monospace;font-size:11px;letter-spacing:-0.6px;color:#111">1010</div>
<div class="a" style="left:1683px;top:500px;width:70px;text-align:center;font-family:'Liberation Mono',monospace;font-size:11px;letter-spacing:-0.6px;color:#111">11:04:18</div>
<div class="a" style="left:1753px;top:500px;width:67px;text-align:right;font-family:'Liberation Mono',monospace;font-size:11px;letter-spacing:-0.6px;color:#111">358280</div>
<div class="a" style="left:1881px;top:498px;width:4px;overflow:hidden;font-size:12px;color:#111"><i>手</i></div>
<div class="a" style="left:513px;top:522px;width:70px;text-align:center;font-family:'Liberation Mono',monospace;font-size:11px;letter-spacing:-0.6px;color:#111">11:04:18</div>
<div class="a" style="left:583px;top:520px;width:100px;text-align:center;font-size:12px;color:#111"><i>上</i><i>海</i><i>股</i><i>票</i><i>期</i><i>权</i></div>
<div class="a" style="left:683px;top:521px;width:70px;text-align:center;font-weight:bold;font-size:12px;color:#1e74d0">10004944</div>
<div class="a" style="left:753px;top:520px;width:200px;text-align:center;font-size:12px;color:#2f86d8"><span style="font-family:'Liberation Serif',serif;font-size:11.5px">50ETF</span><i>购</i>2<i>月</i>2700</div>
<div class="a" style="left:953px;top:520px;width:60px;text-align:center;font-size:12px;color:#1a9a1a"><i>卖</i></div>
<div class="a" style="left:1013px;top:520px;width:60px;text-align:center;font-size:12px;color:#c040c8"><i>平</i><i>仓</i></div>
<div class="a" style="left:1073px;top:522px;width:67px;text-align:right;font-family:'Liberation Mono',monospace;font-size:11px;letter-spacing:-0.6px;color:#111">0.0723</div>
<div class="a" style="left:1143px;top:522px;width:67px;text-align:right;font-family:'Liberation Mono',monospace;font-size:11px;letter-spacing:-0.6px;color:#111">7</div>
<div class="a" style="left:1213px;top:522px;width:91px;text-align:right;font-family:'Liberation Mono',monospace;font-size:11px;letter-spacing:-0.6px;color:#111">0.0722</div>
<div class="a" style="left:1313px;top:522px;width:61px;text-align:right;font-family:'Liberation Mono',monospace;font-size:11px;letter-spacing:-0.6px;color:#111">30</div>
<div class="a" style="left:1383px;top:522px;width:87px;text-align:right;font-family:'Liberation Mono',monospace;font-size:11px;letter-spacing:-0.6px;color:#111">5061.00</div>
<div class="a" style="left:1473px;top:520px;width:70px;text-align:center;font-size:12px;color:#e8141a"><i>认</i><i>购</i></div>
<div class="a" style="left:1543px;top:520px;width:60px;text-align:center;font-size:12px;color:#c040c8"><i>非</i><i>备</i><i>兑</i></div>
<div class="a" style="left:1603px;top:522px;width:77px;text-align:right;font-family:'Liberation Mono',monospace;font-size:11px;letter-spacing:-0.6px;color:#111">1010</div>
<div class="a" style="left:1683px;top:522px;width:70px;text-align:center;font-family:'Liberation Mono',monospace;font-size:11px;letter-spacing:-0.6px;color:#111">11:04:18</div>
<div class="a" style="left:1753px;top:522px;width:67px;text-align:right;font-family:'Liberation Mono',monospace;font-size:11px;letter-spacing:-0.6px;color:#111">358279</div>
<div class="a" style="left:1881px;top:520px;width:4px;overflow:hidden;font-size:12px;color:#111"><i>手</i></div>
<div class="a" style="left:513px;top:544px;width:70px;text-align:center;font-family:'Liberation Mono',monospace;font-size:11px;letter-spacing:-0.6px;color:#111">10:36:30</div>
<div class="a" style="left:583px;top:542px;width:100px;text-align:center;font-size:12px;color:#111"><i>上</i><i>海</i><i>股</i><i>票</i><i>期</i><i>权</i></div>
<div class="a" style="left:683px;top:543px;width:70px;text-align:center;font-weight:bold;font-size:12px;color:#1e74d0">10004944</div>
<div class="a" style="left:753px;top:542px;width:200px;text-align:center;font-size:12px;color:#2f86d8"><span style="font-family:'Liberation Serif',serif;font-size:11.5px">50ETF</span><i>购</i>2<i>月</i>2700</div>
<div class="a" style="left:953px;top:542px;width:60px;text-align:center;font-size:12px;color:#e8141a"><i>买</i></div>
<div class="a" style="left:1013px;top:542px;width:60px;text-align:center;font-size:12px;color:#111"><i>开</i><i>仓</i></div>
<div class="a" style="left:1073px;top:544px;width:67px;text-align:right;font-family:'Liberation Mono',monospace;font-size:11px;letter-spacing:-0.6px;color:#111">0.0674</div>
<div class="a" style="left:1143px;top:544px;width:67px;text-align:right;font-family:'Liberation Mono',monospace;font-size:11px;letter-spacing:-0.6px;color:#111">11</div>
<div class="a" style="left:1213px;top:544px;width:91px;text-align:right;font-family:'Liberation Mono',monospace;font-size:11px;letter-spacing:-0.6px;color:#111">0.0674</div>
<div class="a" style="left:1313px;top:544px;width:61px;text-align:right;font-family:'Liberation Mono',monospace;font-size:11px;letter-spacing:-0.6px;color:#111">30</div>
<div class="a" style="left:1383px;top:544px;width:87px;text-align:right;font-family:'Liberation Mono',monospace;font-size:11px;letter-spacing:-0.6px;color:#111">7414.00</div>
<div class="a" style="left:1473px;top:542px;width:70px;text-align:center;font-size:12px;color:#e8141a"><i>认</i><i>购</i></div>
<div class="a" style="left:1543px;top:542px;width:60px;text-align:center;font-size:12px;color:#c040c8"><i>非</i><i>备</i><i>兑</i></div>
<div class="a" style="left:1603px;top:544px;width:77px;text-align:right;font-family:'Liberation Mono',monospace;font-size:11px;letter-spacing:-0.6px;color:#111">775</div>
<div class="a" style="left:1683px;top:544px;width:70px;text-align:center;font-family:'Liberation Mono',monospace;font-size:11px;letter-spacing:-0.6px;color:#111">10:36:29</div>
<div class="a" style="left:1753px;top:544px;width:67px;text-align:right;font-family:'Liberation Mono',monospace;font-size:11px;letter-spacing:-0.6px;color:#111">289258</div>
<div class="a" style="left:1881px;top:542px;width:4px;overflow:hidden;font-size:12px;color:#111"><i>手</i></div>
<div class="a" style="left:513px;top:566px;width:70px;text-align:center;font-family:'Liberation Mono',monospace;font-size:11px;letter-spacing:-0.6px;color:#111">10:36:30</div>
<div class="a" style="left:583px;top:564px;width:100px;text-align:center;font-size:12px;color:#111"><i>上</i><i>海</i><i>股</i><i>票</i><i>期</i><i>权</i></div>
<div class="a" style="left:683px;top:565px;width:70px;text-align:center;font-weight:bold;font-size:12px;color:#1e74d0">10004944</div>
<div class="a" style="left:753px;top:564px;width:200px;text-align:center;font-size:12px;color:#2f86d8"><span style="font-family:'Liberation Serif',serif;font-size:11.5px">50ETF</span><i>购</i>2<i>月</i>2700</div>
<div class="a" style="left:953px;top:564px;width:60px;text-align:center;font-size:12px;color:#e8141a"><i>买</i></div>
<div class="a" style="left:1013px;top:564px;width:60px;text-align:center;font-size:12px;color:#111"><i>开</i><i>仓</i></div>
<div class="a" style="left:1073px;top:566px;width:67px;text-align:right;font-family:'Liberation Mono',monospace;font-size:11px;letter-spacing:-0.6px;color:#111">0.0674</div>
<div class="a" style="left:1143px;top:566px;width:67px;text-align:right;font-family:'Liberation Mono',monospace;font-size:11px;letter-spacing:-0.6px;color:#111">12</div>
<div class="a" style="left:1213px;top:566px;width:91px;text-align:right;font-family:'Liberation Mono',monospace;font-size:11px;letter-spacing:-0.6px;color:#111">0.0674</div>
<div class="a" style="left:1313px;top:566px;width:61px;text-align:right;font-family:'Liberation Mono',monospace;font-size:11px;letter-spacing:-0.6px;color:#111">30</div>
<div class="a" style="left:1383px;top:566px;width:87px;text-align:right;font-family:'Liberation Mono',monospace;font-size:11px;letter-spacing:-0.6px;color:#111">8088.00</div>
<div class="a" style="left:1473px;top:564px;width:70px;text-align:center;font-size:12px;color:#e8141a"><i>认</i><i>购</i></div>
<div class="a" style="left:1543px;top:564px;width:60px;text-align:center;font-size:12px;color:#c040c8"><i>非</i><i>备</i><i>兑</i></div>
<div class="a" style="left:1603px;top:566px;width:77px;text-align:right;font-family:'Liberation Mono',monospace;font-size:11px;letter-spacing:-0.6px;color:#111">775</div>
<div class="a" style="left:1683px;top:566px;width:70px;text-align:center;font-family:'Liberation Mono',monospace;font-size:11px;letter-spacing:-0.6px;color:#111">10:36:29</div>
<div class="a" style="left:1753px;top:566px;width:67px;text-align:right;font-family:'Liberation Mono',monospace;font-size:11px;letter-spacing:-0.6px;color:#111">289256</div>
<div class="a" style="left:1881px;top:564px;width:4px;overflow:hidden;font-size:12px;color:#111"><i>手</i></div>
<div class="a" style="left:513px;top:588px;width:70px;text-align:center;font-family:'Liberation Mono',monospace;font-size:11px;letter-spacing:-0.6px;color:#111">10:36:30</div>
<div class="a" style="left:583px;top:586px;width:100px;text-align:center;font-size:12px;color:#111"><i>上</i><i>海</i><i>股</i><i>票</i><i>期</i><i>权</i></div>
<div class="a" style="left:683px;top:587px;width:70px;text-align:center;font-weight:bold;font-size:12px;color:#1e74d0">10004944</div>
<div class="a" style="left:753px;top:586px;width:200px;text-align:center;font-size:12px;color:#2f86d8"><span style="font-family:'Liberation Serif',serif;font-size:11.5px">50ETF</span><i>购</i>2<i>月</i>2700</div>
<div class="a" style="left:953px;top:586px;width:60px;text-align:center;font-size:12px;color:#e8141a"><i>买</i></div>
<div class="a" style="left:1013px;top:586px;width:60px;text-align:center;font-size:12px;color:#111"><i>开</i><i>仓</i></div>
<div class="a" style="left:1073px;top:588px;width:67px;text-align:right;font-family:'Liberation Mono',monospace;font-size:11px;letter-spacing:-0.6px;color:#111">0.0674</div>
<div class="a" style="left:1143px;top:588px;width:67px;text-align:right;font-family:'Liberation Mono',monospace;font-size:11px;letter-spacing:-0.6px;color:#111">7</div>
<div class="a" style="left:1213px;top:588px;width:91px;text-align:right;font-family:'Liberation Mono',monospace;font-size:11px;letter-spacing:-0.6px;color:#111">0.0674</div>
<div class="a" style="left:1313px;top:588px;width:61px;text-align:right;font-family:'Liberation Mono',monospace;font-size:11px;letter-spacing:-0.6px;color:#111">30</div>
<div class="a" style="left:1383px;top:588px;width:87px;text-align:right;font-family:'Liberation Mono',monospace;font-size:11px;letter-spacing:-0.6px;color:#111">4718.00</div>
<div class="a" style="left:1473px;top:586px;width:70px;text-align:center;font-size:12px;color:#e8141a"><i>认</i><i>购</i></div>
<div class="a" style="left:1543px;top:586px;width:60px;text-align:center;font-size:12px;color:#c040c8"><i>非</i><i>备</i><i>兑</i></div>
<div class="a" style="left:1603px;top:588px;width:77px;text-align:right;font-family:'Liberation Mono',monospace;font-size:11px;letter-spacing:-0.6px;color:#111">775</div>
<div class="a" style="left:1683px;top:588px;width:70px;text-align:center;font-family:'Liberation Mono',monospace;font-size:11px;letter-spacing:-0.6px;color:#111">10:36:29</div>
<div class="a" style="left:1753px;top:588px;width:67px;text-align:right;font-family:'Liberation Mono',monospace;font-size:11px;letter-spacing:-0.6px;color:#111">289244</div>
<div class="a" style="left:1881px;top:586px;width:4px;overflow:hidden;font-size:12px;color:#111"><i>手</i></div>
<div class="a" style="left:513px;top:610px;width:70px;text-align:center;font-family:'Liberation Mono',monospace;font-size:11px;letter-spacing:-0.6px;color:#111">10:21:08</div>
<div class="a" style="left:583px;top:608px;width:100px;text-align:center;font-size:12px;color:#111"><i>上</i><i>海</i><i>股</i><i>票</i><i>期</i><i>权</i></div>
<div class="a" style="left:683px;top:609px;width:70px;text-align:center;font-weight:bold;font-size:12px;color:#1e74d0">10004945</div>
<div class="a" style="left:753px;top:608px;width:200px;text-align:center;font-size:12px;color:#2f86d8"><span style="font-family:'Liberation Serif',serif;font-size:11.5px">50ETF</span><i>购</i>2<i>月</i>2750</div>
<div class="a" style="left:953px;top:608px;width:60px;text-align:center;font-size:12px;color:#e8141a"><i>买</i></div>
<div class="a" style="left:1013px;top:608px;width:60px;text-align:center;font-size:12px;color:#c040c8"><i>平</i><i>仓</i></div>
<div class="a" style="left:1073px;top:610px;width:67px;text-align:right;font-family:'Liberation Mono',monospace;font-size:11px;letter-spacing:-0.6px;color:#111">0.0360</div>
<div class="a" style="left:1143px;top:610px;width:67px;text-align:right;font-family:'Liberation Mono',monospace;font-size:11px;letter-spacing:-0.6px;color:#111">5</div>
<div class="a" style="left:1213px;top:610px;width:91px;text-align:right;font-family:'Liberation Mono',monospace;font-size:11px;letter-spacing:-0.6px;color:#111">0.0363</div>
<div class="a" style="left:1313px;top:610px;width:61px;text-align:right;font-family:'Liberation Mono',monospace;font-size:11px;letter-spacing:-0.6px;color:#111">5</div>
<div class="a" style="left:1383px;top:610px;width:87px;text-align:right;font-family:'Liberation Mono',monospace;font-size:11px;letter-spacing:-0.6px;color:#111">1800.00</div>
<div class="a" style="left:1473px;top:608px;width:70px;text-align:center;font-size:12px;color:#e8141a"><i>认</i><i>购</i></div>
<div class="a" style="left:1543px;top:608px;width:60px;text-align:center;font-size:12px;color:#c040c8"><i>非</i><i>备</i><i>兑</i></div>
<div class="a" style="left:1603px;top:610px;width:77px;text-align:right;font-family:'Liberation Mono',monospace;font-size:11px;letter-spacing:-0.6px;color:#111">578</div>
<div class="a" style="left:1683px;top:610px;width:70px;text-align:center;font-family:'Liberation Mono',monospace;font-size:11px;letter-spacing:-0.6px;color:#111">10:21:07</div>
<div class="a" style="left:1753px;top:610px;width:67px;text-align:right;font-family:'Liberation Mono',monospace;font-size:11px;letter-spacing:-0.6px;color:#111">224415</div>
<div class="a" style="left:1881px;top:608px;width:4px;overflow:hidden;font-size:12px;color:#111"><i>手</i></div>
<div class="a" style="left:513px;top:632px;width:70px;text-align:center;font-family:'Liberation Mono',monospace;font-size:11px;letter-spacing:-0.6px;color:#111">10:19:29</div>
<div class="a" style="left:583px;top:630px;width:100px;text-align:center;font-size:12px;color:#111"><i>上</i><i>海</i><i>股</i><i>票</i><i>期</i><i>权</i></div>
<div class="a" style="left:683px;top:631px;width:70px;text-align:center;font-weight:bold;font-size:12px;color:#1e74d0">10004955</div>
<div class="a" style="left:753px;top:630px;width:200px;text-align:center;font-size:12px;color:#2f86d8"><span style="font-family:'Liberation Serif',serif;font-size:11.5px">50ETF</span><i>沽</i>2<i>月</i>2800</div>
<div class="a" style="left:953px;top:630px;width:60px;text-align:center;font-size:12px;color:#1a9a1a"><i>卖</i></div>
<div class="a" style="left:1013px;top:630px;width:60px;text-align:center;font-size:12px;color:#111"><i>开</i><i>仓</i></div>
<div class="a" style="left:1073px;top:632px;width:67px;text-align:right;font-family:'Liberation Mono',monospace;font-size:11px;letter-spacing:-0.6px;color:#111">0.0462</div>
<div class="a" style="left:1143px;top:632px;width:67px;text-align:right;font-family:'Liberation Mono',monospace;font-size:11px;letter-spacing:-0.6px;color:#111">3</div>
<div class="a" style="left:1213px;top:632px;width:91px;text-align:right;font-family:'Liberation Mono',monospace;font-size:11px;letter-spacing:-0.6px;color:#111">0.0460</div>
<div class="a" style="left:1313px;top:632px;width:61px;text-align:right;font-family:'Liberation Mono',monospace;font-size:11px;letter-spacing:-0.6px;color:#111">3</div>
<div class="a" style="left:1383px;top:632px;width:87px;text-align:right;font-family:'Liberation Mono',monospace;font-size:11px;letter-spacing:-0.6px;color:#111">1386.00</div>
<div class="a" style="left:1473px;top:630px;width:70px;text-align:center;font-size:12px;color:#1a9a1a"><i>认</i><i>沽</i></div>
<div class="a" style="left:1543px;top:630px;width:60px;text-align:center;font-size:12px;color:#c040c8"><i>非</i><i>备</i><i>兑</i></div>
<div class="a" style="left:1603px;top:632px;width:77px;text-align:right;font-family:'Liberation Mono',monospace;font-size:11px;letter-spacing:-0.6px;color:#111">556</div>
<div class="a" style="left:1683px;top:632px;width:70px;text-align:center;font-family:'Liberation Mono',monospace;font-size:11px;letter-spacing:-0.6px;color:#111">10:19:28</div>
<div class="a" style="left:1753px;top:632px;width:67px;text-align:right;font-family:'Liberation Mono',monospace;font-size:11px;letter-spacing:-0.6px;color:#111">216808</div>
<div class="a" style="left:1881px;top:630px;width:4px;overflow:hidden;font-size:12px;color:#111"><i>手</i></div>
<div class="a" style="left:513px;top:654px;width:70px;text-align:center;font-family:'Liberation Mono',monospace;font-size:11px;letter-spacing:-0.6px;color:#111">09:51:19</div>
<div class="a" style="left:583px;top:652px;width:100px;text-align:center;font-size:12px;color:#111"><i>上</i><i>海</i><i>股</i><i>票</i><i>期</i><i>权</i></div>
<div class="a" style="left:683px;top:653px;width:70px;text-align:center;font-weight:bold;font-size:12px;color:#1e74d0">10004945</div>
<div class="a" style="left:753px;top:652px;width:200px;text-align:center;font-size:12px;color:#2f86d8"><span style="font-family:'Liberation Serif',serif;font-size:11.5px">50ETF</span><i>购</i>2<i>月</i>2750</div>
<div class="a" style="left:953px;top:652px;width:60px;text-align:center;font-size:12px;color:#1a9a1a"><i>卖</i></div>
<div class="a" style="left:1013px;top:652px;width:60px;text-align:center;font-size:12px;color:#111"><i>开</i><i>仓</i></div>
<div class="a" style="left:1073px;top:654px;width:67px;text-align:right;font-family:'Liberation Mono',monospace;font-size:11px;letter-spacing:-0.6px;color:#111">0.0447</div>
<div class="a" style="left:1143px;top:654px;width:67px;text-align:right;font-family:'Liberation Mono',monospace;font-size:11px;letter-spacing:-0.6px;color:#111">5</div>
<div class="a" style="left:1213px;top:654px;width:91px;text-align:right;font-family:'Liberation Mono',monospace;font-size:11px;letter-spacing:-0.6px;color:#111">0.0445</div>
<div class="a" style="left:1313px;top:654px;width:61px;text-align:right;font-family:'Liberation Mono',monospace;font-size:11px;letter-spacing:-0.6px;color:#111">5</div>
<div class="a" style="left:1383px;top:654px;width:87px;text-align:right;font-family:'Liberation Mono',monospace;font-size:11px;letter-spacing:-0.6px;color:#111">2235.00</div>
<div class="a" style="left:1473px;top:652px;width:70px;text-align:center;font-size:12px;color:#e8141a"><i>认</i><i>购</i></div>
<div class="a" style="left:1543px;top:652px;width:60px;text-align:center;font-size:12px;color:#c040c8"><i>非</i><i>备</i><i>兑</i></div>
<div class="a" style="left:1603px;top:654px;width:77px;text-align:right;font-family:'Liberation Mono',monospace;font-size:11px;letter-spacing:-0.6px;color:#111">230</div>
<div class="a" style="left:1683px;top:654px;width:70px;text-align:center;font-family:'Liberation Mono',monospace;font-size:11px;letter-spacing:-0.6px;color:#111">09:51:19</div>
<div class="a" style="left:1753px;top:654px;width:67px;text-align:right;font-family:'Liberation Mono',monospace;font-size:11px;letter-spacing:-0.6px;color:#111">120258</div>
<div class="a" style="left:1881px;top:652px;width:4px;overflow:hidden;font-size:12px;color:#111"><i>手</i></div>
<div class="a" style="left:513px;top:676px;width:70px;text-align:center;font-family:'Liberation Mono',monospace;font-size:11px;letter-spacing:-0.6px;color:#111">09:43:49</div>
<div class="a" style="left:583px;top:674px;width:100px;text-align:center;font-size:12px;color:#111"><i>上</i><i>海</i><i>股</i><i>票</i><i>期</i><i>权</i></div>
<div class="a" style="left:683px;top:675px;width:70px;text-align:center;font-weight:bold;font-size:12px;color:#1e74d0">10004955</div>
<div class="a" style="left:753px;top:674px;width:200px;text-align:center;font-size:12px;color:#2f86d8"><span style="font-family:'Liberation Serif',serif;font-size:11.5px">50ETF</span><i>沽</i>2<i>月</i>2800</div>
<div class="a" style="left:953px;top:674px;width:60px;text-align:center;font-size:12px;color:#1a9a1a"><i>卖</i></div>
<div class="a" style="left:1013px;top:674px;width:60px;text-align:center;font-size:12px;color:#111"><i>开</i><i>仓</i></div>
<div class="a" style="left:1073px;top:676px;width:67px;text-align:right;font-family:'Liberation Mono',monospace;font-size:11px;letter-spacing:-0.6px;color:#111">0.0381</div>
<div class="a" style="left:1143px;top:676px;width:67px;text-align:right;font-family:'Liberation Mono',monospace;font-size:11px;letter-spacing:-0.6px;color:#111">5</div>
<div class="a" style="left:1213px;top:676px;width:91px;text-align:right;font-family:'Liberation Mono',monospace;font-size:11px;letter-spacing:-0.6px;color:#111">0.0381</div>
<div class="a" style="left:1313px;top:676px;width:61px;text-align:right;font-family:'Liberation Mono',monospace;font-size:11px;letter-spacing:-0.6px;color:#111">5</div>
<div class="a" style="left:1383px;top:676px;width:87px;text-align:right;font-family:'Liberation Mono',monospace;font-size:11px;letter-spacing:-0.6px;color:#111">1905.00</div>
<div class="a" style="left:1473px;top:674px;width:70px;text-align:center;font-size:12px;color:#1a9a1a"><i>认</i><i>沽</i></div>
<div class="a" style="left:1543px;top:674px;width:60px;text-align:center;font-size:12px;color:#c040c8"><i>非</i><i>备</i><i>兑</i></div>
<div class="a" style="left:1603px;top:676px;width:77px;text-align:right;font-family:'Liberation Mono',monospace;font-size:11px;letter-spacing:-0.6px;color:#111">187</div>
<div class="a" style="left:1683px;top:676px;width:70px;text-align:center;font-family:'Liberation Mono',monospace;font-size:11px;letter-spacing:-0.6px;color:#111">09:43:46</div>
<div class="a" style="left:1753px;top:676px;width:67px;text-align:right;font-family:'Liberation Mono',monospace;font-size:11px;letter-spacing:-0.6px;color:#111">87476</div>
<div class="a" style="left:1881px;top:674px;width:4px;overflow:hidden;font-size:12px;color:#111"><i>手</i></div>
<div class="a" style="left:513px;top:696px;width:70px;text-align:center;font-size:12px;font-weight:bold;color:#111"><i>汇</i><i>总</i></div>
<div class="a" style="left:1143px;top:698px;width:67px;text-align:right;font-family:'Liberation Mono',monospace;font-size:11px;letter-spacing:-0.6px;font-weight:bold;color:#111">96</div>
<div class="a" style="left:1313px;top:698px;width:61px;text-align:right;font-family:'Liberation Mono',monospace;font-size:11px;letter-spacing:-0.6px;font-weight:bold;color:#111">256</div>
<div class="a" style="left:1383px;top:698px;width:87px;text-align:right;font-family:'Liberation Mono',monospace;font-size:11px;letter-spacing:-0.6px;font-weight:bold;color:#111">58014.00</div>
<div class="a" style="left:514px;top:986px;width:1370px;height:17px;background:#eef3f8;border-top:1px solid #d0d8e2"></div>
<div class="a" style="left:514px;top:987px;width:17px;height:16px;background:#fff;border-right:1px solid #d0d8e2"></div>
<svg class="a" style="left:518px;top:990px" width="9" height="10"><path d="M7 1 L2 5 L7 9Z" fill="#c0cad6"/></svg>
<div class="a" style="left:531px;top:987px;width:1262px;height:16px;background:#eef3f8;border-right:1px solid #c8d2de"></div>
<div class="a" style="left:1867px;top:987px;width:17px;height:16px;background:#fff;border-left:1px solid #d0d8e2"></div>
<svg class="a" style="left:1871px;top:990px" width="9" height="10"><path d="M2 1 L7 5 L2 9Z" fill="#c0cad6"/></svg>
</div>
<div class="a" style="left:0;top:1008px;width:1904px;height:2px;background:#6a1010"></div>
<div class="a" style="left:0;top:1010px;width:1920px;height:30px;background:#141518"></div>
<svg class="a" style="left:0;top:1010px" width="30" height="30"><path d="M4 29 Q-2 18 14 12" stroke="#3070e0" stroke-width="1.6" fill="none"/><path d="M8 28 L23 2 M8 27 L26 8" stroke="#3070e0" stroke-width="1.4" fill="none"/></svg>
<div class="a" style="left:23px;top:1024px;font-size:14px;font-weight:bold;color:#3a7ae8;letter-spacing:-0.5px"><i>汇</i><i>点</i><i>期</i><i>权</i></div>
<div class="a" style="left:96px;top:1014px;width:48px;height:24px;background:#23262b;border:1px solid #2c2f34;color:#d8d8d8;font-size:14px;text-align:center;line-height:22px"><i>上</i><i>证</i></div>
<div class="a" style="left:432px;top:1014px;width:48px;height:24px;background:#23262b;border:1px solid #2c2f34;color:#d8d8d8;font-size:14px;text-align:center;line-height:22px"><i>深</i><i>证</i></div>
<div class="a" style="left:768px;top:1014px;width:48px;height:24px;background:#23262b;border:1px solid #2c2f34;color:#d8d8d8;font-size:14px;text-align:center;line-height:22px"><i>科</i><i>创</i></div>
<div class="a" style="left:154px;top:1019px;font-family:'Liberation Mono',monospace;font-size:13px;letter-spacing:-0.8px;color:#22dd22">3279.235</div>
<div class="a" style="left:229px;top:1019px;font-family:'Liberation Mono',monospace;font-size:13px;letter-spacing:-0.8px;color:#22dd22">-14.048</div>
<div class="a" style="left:293px;top:1019px;font-family:'Liberation Mono',monospace;font-size:13px;letter-spacing:-0.8px;color:#22dd22">-0.43%</div>
<div class="a" style="left:490px;top:1019px;font-family:'Liberation Mono',monospace;font-size:13px;letter-spacing:-0.8px;color:#22dd22">12054.02</div>
<div class="a" style="left:569px;top:1019px;font-family:'Liberation Mono',monospace;font-size:13px;letter-spacing:-0.8px;color:#22dd22">-40.92</div>
<div class="a" style="left:629px;top:1019px;font-family:'Liberation Mono',monospace;font-size:13px;letter-spacing:-0.8px;color:#22dd22">-0.34%</div>
<div class="a" style="left:826px;top:1019px;font-family:'Liberation Mono',monospace;font-size:13px;letter-spacing:-0.8px;color:#ff2828">1024.496</div>
<div class="a" style="left:908px;top:1019px;font-family:'Liberation Mono',monospace;font-size:13px;letter-spacing:-0.8px;color:#ff2828">1.827</div>
<div class="a" style="left:969px;top:1019px;font-family:'Liberation Mono',monospace;font-size:13px;letter-spacing:-0.8px;color:#ff2828">0.18%</div>
<div class="a" style="left:355px;top:1018px;font-size:13px;color:#e8e8e8">3418<i>亿</i></div>
<div class="a" style="left:691px;top:1018px;font-size:13px;color:#e8e8e8">5515<i>亿</i></div>
<div class="a" style="left:1029px;top:1018px;font-size:13px;color:#e8e8e8">607<i>亿</i></div>
<div class="a" style="left:1313px;top:1018px;font-size:12px;color:#e0e0e0">2023<i>年</i>01<i>月</i>30<i>日</i><i>深</i><i>圳</i><i>证</i><i>券</i><i>交</i><i>易</i><i>所</i><i>期</i><i>权</i><i>合</i><i>约</i><i>新</i><i>挂</i><i>、</i><i>摘</i><i>牌</i><i>、</i><i>调</i><i>整</i><i>信</i><i>息</i></div>
<div class="a" style="left:1669px;top:1018px;font-size:12px;color:#e0e0e0"><i>关</i><i>于</i><i>提</i><i>醒</i>ETF<i>期</i><i>权</i></div>
<svg class="a" style="left:1766px;top:1016px" width="18" height="18"><rect x="1" y="11" width="3" height="6" rx="1" fill="#3a7ae8"/><rect x="7" y="6" width="3" height="11" rx="1" fill="#3a7ae8"/><rect x="13" y="1" width="3" height="16" rx="1" fill="#3a7ae8"/></svg>
<svg class="a" style="left:1796px;top:1019px" width="22" height="13"><rect x="1.5" y="1.5" width="19" height="10" rx="5" fill="none" stroke="#3a7ae8" stroke-width="2.5"/><path d="M7 6.5 H15" stroke="#3a7ae8" stroke-width="2.5"/><rect x="9" y="0" width="4" height="3" fill="#141518"/><rect x="9" y="10" width="4" height="3" fill="#141518"/></svg>
<div class="a" style="left:1832px;top:1019px;font-family:'Liberation Mono',monospace;font-size:12px;letter-spacing:-0.2px;font-size:11px;color:#e8e8e8">14:51:01</div>
<div class="a" style="left:1891px;top:1018px;font-size:13px;color:#e8e8e8"><i>周</i><i>三</i></div>
<div class="a" style="left:0;top:1040px;width:1920px;height:40px;background:linear-gradient(90deg,#1b3a44 0%,#1f3a44 25%,#1f3342 60%,#1b2a42 100%)"></div>
<svg class="a" style="left:15px;top:1051px" width="18" height="18"><path d="M0 2.5 L7.5 1.4 V8.4 H0Z M8.5 1.2 L18 0 V8.4 H8.5Z M0 9.5 H7.5 V16.6 L0 15.5Z M8.5 9.5 H18 V18 L8.5 16.8Z" fill="#fff"/></svg>
<div class="a" style="left:48px;top:1040px;width:288px;height:40px;background:#f0f0f0"></div>
<svg class="a" style="left:58px;top:1050px" width="20" height="20"><circle cx="12" cy="8" r="6" fill="none" stroke="#222" stroke-width="1.5"/><path d="M7.5 12.5 L1.5 18.5" stroke="#222" stroke-width="1.6"/></svg>
<div class="a" style="left:87px;top:1051px;font-size:14px;color:#222"><i>搜</i><i>索</i></div>
<svg class="a" style="left:255px;top:1040px" width="81" height="40"><defs><linearGradient id="hg" x1="0" y1="0" x2="0" y2="1"><stop offset="0" stop-color="#b39aa6"/><stop offset="1" stop-color="#8c6e7c"/></linearGradient><linearGradient id="wg" x1="0" y1="0" x2="1" y2="0"><stop offset="0" stop-color="#a8bde0"/><stop offset="1" stop-color="#8fc0a8"/></linearGradient></defs><path d="M0 40 Q20 28 50 29 Q70 29 81 30 V40Z" fill="url(#wg)"/><path d="M66 30 Q64 15 70 3 M70 30 Q70 14 76 2 M73 30 Q76 18 81 8 M68 30 Q66 20 62 12" stroke="#4e9a4a" stroke-width="2" fill="none"/><path d="M16 14 Q30 8 52 10 Q66 12 67 22 L72 23 L67 25 Q64 32 58 34 L54 34 L53 28 L40 28 L38 35 L32 35 L30 28 Q20 28 18 26Z" fill="url(#hg)"/><path d="M10 8 Q8 5 11 4 Q13 6 14 8 Q18 6 22 8 Q24 4 26 5 Q27 8 26 10 Q28 16 26 20 Q28 25 22 27 L12 27 Q6 25 8 20 Q6 14 10 8Z" fill="url(#hg)"/><circle cx="13" cy="14" r="1.2" fill="#333"/><circle cx="21" cy="14" r="1.2" fill="#333"/><circle cx="13" cy="22" r="1" fill="#553"/><circle cx="20" cy="22" r="1" fill="#553"/></svg>
<svg class="a" style="left:351px;top:1052px" width="18" height="16"><rect x="1" y="3" width="12" height="10" fill="none" stroke="#fff" stroke-width="1.5"/><path d="M1 0.5H13M1 15.5H13M16 2V14" stroke="#fff" stroke-width="1.5"/></svg>
<svg class="a" style="left:399px;top:1047px" width="26" height="26"><defs><linearGradient id="eg1" x1="0" y1="0" x2="1" y2="0.3"><stop offset="0" stop-color="#2aa0e0"/><stop offset="1" stop-color="#58d060"/></linearGradient><linearGradient id="eg2" x1="0" y1="0" x2="0" y2="1"><stop offset="0" stop-color="#1a70c8"/><stop offset="1" stop-color="#0c4e9a"/></linearGradient></defs><path d="M1 13 A12 12 0 0 1 25 11 Q25 17 19 17 L12 17 Q9 15 10 12 Q12 9 15 11 Q12 5 7 8 Q2 11 1 13Z" fill="url(#eg1)"/><path d="M1 13 Q1 24 12 25 Q18 25 22 21 Q14 24 11 18 Q8 14 10 12 Q5 12 1 13Z" fill="url(#eg2)"/></svg>
<div class="a" style="left:391px;top:1078px;width:40px;height:2px;background:#7ab8ea"></div>
<svg class="a" style="left:448px;top:1048px" width="24" height="24"><circle cx="12" cy="12" r="11.5" fill="#c81a20"/><path d="M5 12 Q5 6 9 4 M19 12 Q19 6 15 4 M5 12 Q5 18 9 20 M19 12 Q19 18 15 20" stroke="#7a0a0e" stroke-width="1.5" fill="none"/><path d="M9 5 V19 M15 5 V19 M12 3 V21" stroke="#7a0a0e" stroke-width="1.5"/></svg>
<div class="a" style="left:485px;top:1040px;width:48px;height:40px;background:#46565e"></div>
<div class="a" style="left:485px;top:1078px;width:48px;height:2px;background:#7ab8ea"></div>
<svg class="a" style="left:498px;top:1050px" width="22" height="20"><ellipse cx="11" cy="10" rx="9.5" ry="8" fill="none" stroke="#1f6ad0" stroke-width="1.8"/><path d="M5 8 Q11 4 16 9 M6 11 Q11 16 17 12" stroke="#1f6ad0" stroke-width="1.8" fill="none"/></svg>
<svg class="a" style="left:1549px;top:1048px" width="26" height="26"><defs><radialGradient id="sg" cx="0.4" cy="0.3"><stop offset="0" stop-color="#ffc030"/><stop offset="1" stop-color="#ef6a10"/></radialGradient></defs><circle cx="11" cy="13" r="10" fill="url(#sg)"/><circle cx="20" cy="4" r="3" fill="#e03030"/></svg>
<div class="a" style="left:1581px;top:1051px;font-size:15px;color:#fff">7°C&nbsp;&nbsp;<i>晴</i><i>朗</i></div>
<svg class="a" style="left:1657px;top:1055px" width="20" height="12"><path d="M2 10 L10 2 L18 10" stroke="#fff" stroke-width="1.6" fill="none"/></svg>
<svg class="a" style="left:1680px;top:1052px" width="16" height="14"><ellipse cx="8" cy="7" rx="6.5" ry="4.5" fill="none" stroke="#1f6ad0" stroke-width="1.3"/><path d="M4 7 Q8 4 12 7 Q8 10 4 7" fill="none" stroke="#1f6ad0"/></svg>
<svg class="a" style="left:1702px;top:1051px" width="20" height="20"><path d="M1 4 L16 2 V14 L1 16Z" fill="none" stroke="#fff" stroke-width="1.3"/><path d="M6 8 Q8 5 11 7 M11 10 Q8 12 6 9" fill="none" stroke="#fff" stroke-width="1.2"/><circle cx="14.5" cy="15" r="3.5" fill="#f0a020"/></svg>
<svg class="a" style="left:1727px;top:1052px" width="20" height="18"><rect x="4" y="3" width="15" height="10" fill="none" stroke="#fff" stroke-width="1.3"/><rect x="1" y="1" width="6" height="5" fill="#1b2a42" stroke="#fff" stroke-width="1.2"/><path d="M11 13 V16 M7 16.5 H15" stroke="#fff" stroke-width="1.3"/></svg>
<svg class="a" style="left:1751px;top:1052px" width="20" height="16"><path d="M1 5 H4 L8 1 V15 L4 11 H1Z" fill="none" stroke="#fff" stroke-width="1.2"/><path d="M11 5 Q13 8 11 11 M14 3 Q17 8 14 13 M17 1 Q21 8 17 15" fill="none" stroke="#aab" stroke-width="1.1"/></svg>
<div class="a" style="left:1774px;top:1049px;font-size:17px;color:#fff"><i>中</i></div>
<div class="a" style="left:1815px;top:1044px;font-size:12.5px;color:#fff">14:51</div>
<div class="a" style="left:1801px;top:1063px;font-size:12.5px;color:#fff">2023/2/15</div>
<svg class="a" style="left:1877px;top:1051px" width="20" height="18"><path d="M1 1 H19 V13 H11 L8 17 V13 H1Z" fill="none" stroke="#fff" stroke-width="1.3"/></svg>
<div class="a" style="left:1915px;top:1040px;width:1px;height:40px;background:#4a5a70"></div>
<div class="a" style="left:1897px;top:231px;width:23px;height:777px;background:#000"></div>
<div class="a" style="left:1904px;top:231px;width:1px;height:134px;background:#333"></div>
<svg class="a" style="left:1906px;top:354px" width="10" height="6"><path d="M1 1 H9 L5 5Z" fill="#444"/></svg>
<div class="a" style="left:1897px;top:365px;width:21px;height:15px;border:1px solid #333;background:#000"></div>
<svg class="a" style="left:1908px;top:367px" width="6" height="10"><path d="M1 1 L5 5 L1 9Z" fill="#555"/></svg>
<div class="a" style="left:1897px;top:380px;width:23px;height:3px;background:#5a1010"></div>
<div class="a" style="left:1897px;top:383px;width:22px;height:32px;background:#1f2125"></div>
<div class="a" style="left:1896px;top:421px;width:19px;height:26px;border:1px solid #2a5aa8;background:#000"></div>
<div class="a" style="left:1895px;top:425px;font-size:16px;color:#aab8d0;width:19px;overflow:hidden"><i>盈</i></div>
<div class="a" style="left:1897px;top:448px;width:21px;height:14px;background:#121a12"></div>
<svg class="a" style="left:1906px;top:450px" width="10" height="7"><path d="M1 6 L5 1 L9 6Z" fill="#556"/></svg>
<div class="a" style="left:1898px;top:240px;font-size:14px;font-weight:bold;color:#e6d24b;width:6px;overflow:hidden">5</div>
<div class="a" style="left:1898px;top:262px;font-size:14px;font-weight:bold;color:#e6d24b;width:6px;overflow:hidden">5</div>
<div class="a" style="left:1898px;top:284px;font-size:14px;font-weight:bold;color:#e6d24b;width:6px;overflow:hidden">3</div>
<div class="a" style="left:1898px;top:306px;font-size:14px;font-weight:bold;color:#e6d24b;width:6px;overflow:hidden">4</div>
<div class="a" style="left:1898px;top:328px;font-size:14px;font-weight:bold;color:#e6d24b;width:6px;overflow:hidden">6</div>
<div class="a" style="left:1898px;top:350px;font-size:14px;font-weight:bold;color:#e6d24b;width:6px;overflow:hidden">7</div>
<div class="a" style="left:1898px;top:475px;font-size:14px;font-weight:bold;color:#00d8e8;width:6px;overflow:hidden">3</div>
<div class="a" style="left:1898px;top:497px;font-size:14px;font-weight:bold;color:#00d8e8;width:6px;overflow:hidden">6</div>
<div class="a" style="left:1898px;top:519px;font-size:14px;font-weight:bold;color:#00d8e8;width:6px;overflow:hidden">6</div>
<div class="a" style="left:1898px;top:541px;font-size:14px;font-weight:bold;color:#00d8e8;width:6px;overflow:hidden">2</div>
<div class="a" style="left:1898px;top:563px;font-size:14px;font-weight:bold;color:#00d8e8;width:6px;overflow:hidden">7</div>
<div class="a" style="left:1898px;top:585px;font-size:14px;font-weight:bold;color:#00d8e8;width:6px;overflow:hidden">3</div>
<div class="a" style="left:1898px;top:607px;font-size:14px;font-weight:bold;color:#00d8e8;width:6px;overflow:hidden">2</div>
<div class="a" style="left:1898px;top:629px;font-size:14px;font-weight:bold;color:#00d8e8;width:6px;overflow:hidden">2</div>
<div class="a" style="left:1898px;top:651px;font-size:14px;font-weight:bold;color:#00d8e8;width:6px;overflow:hidden">8</div>
<div class="a" style="left:1898px;top:673px;font-size:14px;font-weight:bold;color:#00d8e8;width:6px;overflow:hidden">2</div>
<div class="a" style="left:1898px;top:695px;font-size:14px;font-weight:bold;color:#00d8e8;width:6px;overflow:hidden">8</div>
<div class="a" style="left:1898px;top:717px;font-size:14px;font-weight:bold;color:#00d8e8;width:6px;overflow:hidden">6</div>
<div class="a" style="left:1904px;top:456px;width:1px;height:537px;background:#2a2a2a"></div>
<svg class="a" style="left:1906px;top:983px" width="10" height="6"><path d="M1 1 H9 L5 5Z" fill="#444"/></svg>
<div class="a" style="left:1897px;top:993px;width:21px;height:15px;border:1px solid #333;background:#000"></div>
<svg class="a" style="left:1908px;top:995px" width="6" height="10"><path d="M1 1 L5 5 L1 9Z" fill="#555"/></svg>
<div class="a" style="left:1918px;top:231px;width:2px;height:779px;background:#6a1010"></div>
</body></html>
